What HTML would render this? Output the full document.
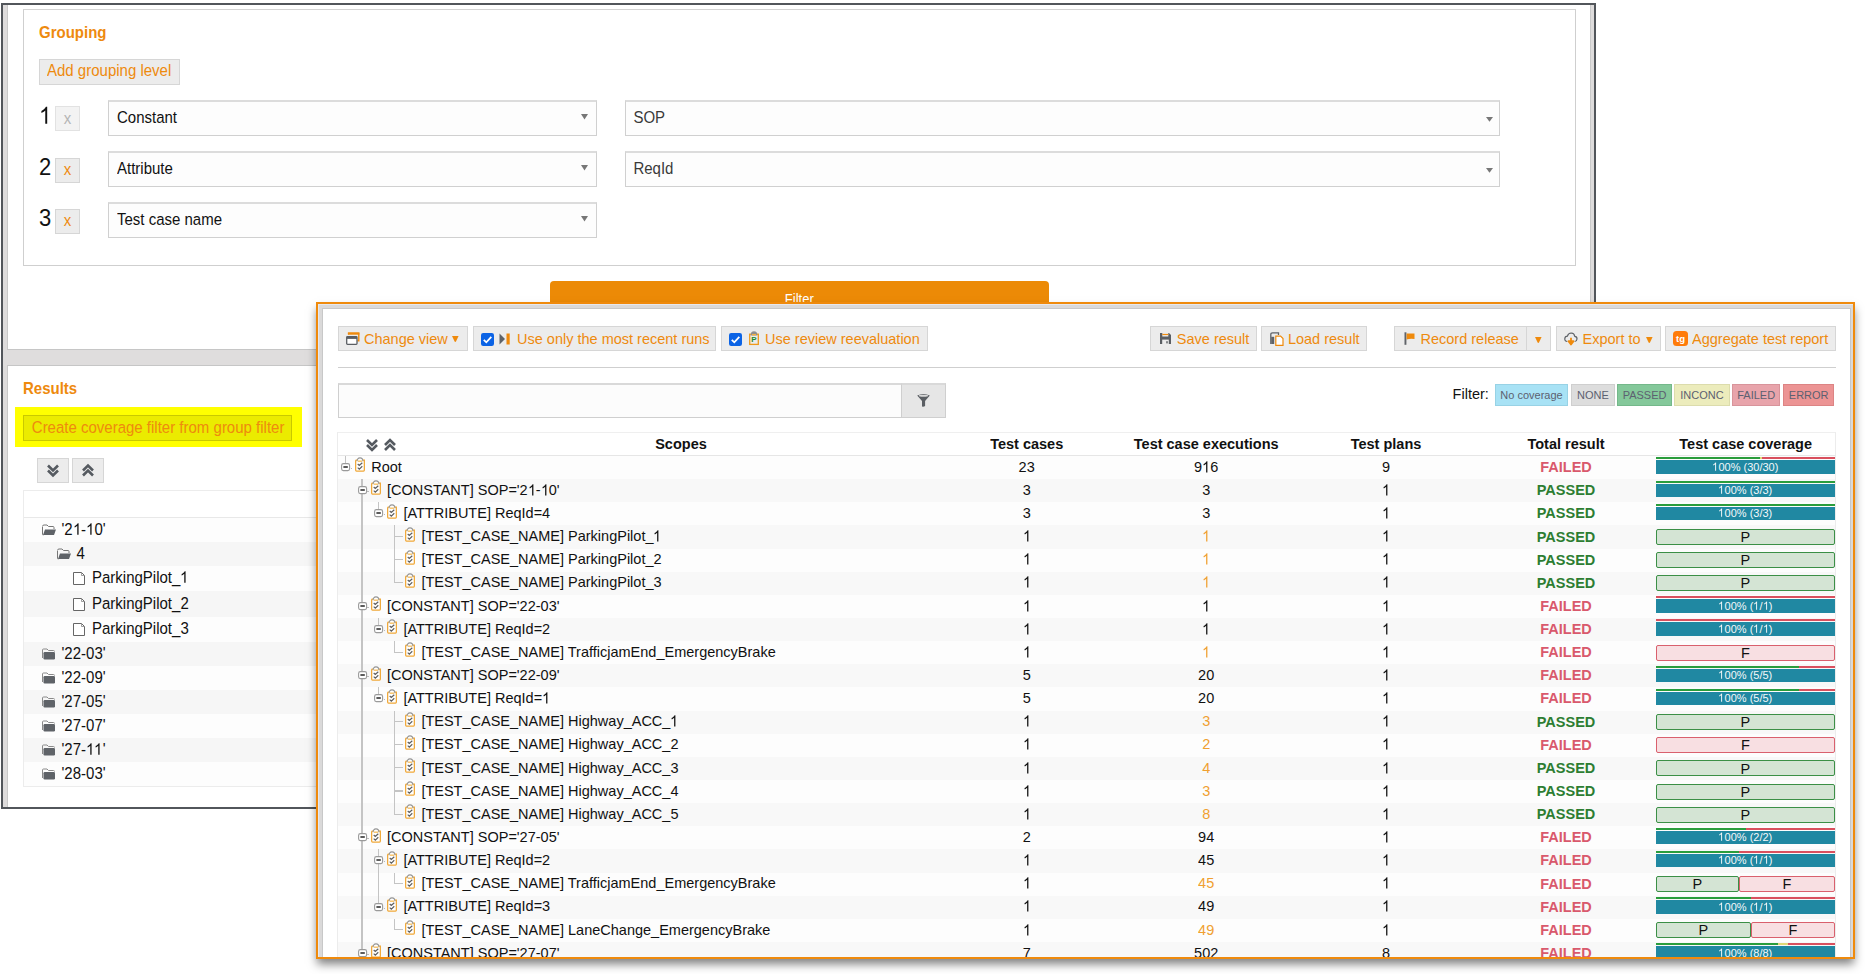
<!DOCTYPE html>
<html><head><meta charset="utf-8"><style>
html,body{margin:0;padding:0;background:#fff;}
body{width:1865px;height:974px;position:relative;overflow:hidden;font-family:"Liberation Sans", sans-serif;}
.a{position:absolute;}
.t{position:absolute;white-space:pre;line-height:1.117;transform:scaleY(1.07);}
svg.a{overflow:visible;}
</style></head><body>
<div class="a" style="left:1.00px;top:3.00px;width:1595.00px;height:806.00px;border:2px solid #52565b;box-sizing:border-box;background:#fff;"></div>
<div class="a" style="left:3.00px;top:5.00px;width:4.00px;height:802.00px;background:#dedcdc;"></div>
<div class="a" style="left:1591.00px;top:5.00px;width:3.00px;height:802.00px;background:#dedcdc;"></div>
<div class="a" style="left:7.00px;top:5.00px;width:1.00px;height:344.00px;background:#c9c9c9;"></div>
<div class="a" style="left:7.00px;top:366.00px;width:1.00px;height:441.00px;background:#c9c9c9;"></div>
<div class="a" style="left:1590.00px;top:5.00px;width:1.00px;height:344.00px;background:#c9c9c9;"></div>
<div class="a" style="left:1590.00px;top:366.00px;width:1.00px;height:441.00px;background:#c9c9c9;"></div>
<div class="a" style="left:3.00px;top:349.00px;width:1591.00px;height:17.00px;background:#dfdddd;"></div>
<div class="a" style="left:7.00px;top:349.00px;width:1584.00px;height:1.00px;background:#c6c6c6;"></div>
<div class="a" style="left:7.00px;top:365.00px;width:1584.00px;height:1.00px;background:#c6c6c6;"></div>
<div class="a" style="left:23.00px;top:9.00px;width:1553.00px;height:257.00px;border:1px solid #cfcfcf;border-top:1px solid #d4d4d4;box-sizing:border-box;"></div>
<div class="t" style="left:39.00px;top:24.92px;font-size:15px;font-weight:700;color:#ee8a0e;transform-origin:0 13.58px;">Grouping</div>
<div class="a" style="left:38.50px;top:58.50px;width:141.50px;height:26.00px;background:#ececec;border:1px solid #d6d6d6;box-sizing:border-box;"></div>
<div class="t" style="left:47.00px;top:62.83px;font-size:15px;font-weight:400;color:#ee8a0e;transform-origin:0 13.58px;">Add grouping level</div>
<div class="t" style="left:38.90px;top:104.69px;font-size:22px;font-weight:400;color:#111;transform-origin:0 19.91px;"><svg width="12.235" height="15.748" viewBox="0 0 1139 1466" style="vertical-align:baseline;overflow:visible"><path d="M763 0H583V1147Q518 1085 412 1023Q306 961 223 930V1104Q373 1175 486 1276Q599 1377 646 1466H763Z" transform="matrix(1 0 0 -1 0 1466)" fill="currentColor"/></svg></div>
<div class="a" style="left:55.00px;top:106.20px;width:25.00px;height:25.00px;background:#f3f3f3;border:1px solid #e2e2e2;box-sizing:border-box;"></div>
<div class="t" style="left:57.50px;top:111.22px;width:20px;text-align:center;font-size:15px;font-weight:400;color:#b5b5b5;transform-origin:0 13.58px;">x</div>
<div class="a" style="left:108.00px;top:100.00px;width:489.00px;height:36.40px;background:#fdfdfd;border:1px solid #d0d0d0;border-top:2px solid #dcdcdc;box-sizing:border-box;"></div>
<div class="t" style="left:117.00px;top:109.62px;font-size:15px;font-weight:400;color:#111;transform-origin:0 13.58px;">Constant</div>
<svg class="a" style="left:580.60px;top:114.20px" width="7" height="5.5" viewBox="0 0 7 5.5"><path d="M0 0H7L3.5 5.5Z" fill="#777"/></svg>
<div class="a" style="left:625.00px;top:100.00px;width:875.00px;height:36.40px;background:#fdfdfd;border:1px solid #d0d0d0;border-top:2px solid #dcdcdc;box-sizing:border-box;"></div>
<div class="t" style="left:633.40px;top:110.22px;font-size:15px;font-weight:400;color:#3a3a3a;transform-origin:0 13.58px;">SOP</div>
<svg class="a" style="left:1485.50px;top:116.90px" width="7" height="4.8" viewBox="0 0 7 4.8"><path d="M0 0H7L3.5 4.8Z" fill="#777"/></svg>
<div class="t" style="left:38.90px;top:155.69px;font-size:22px;font-weight:400;color:#111;transform-origin:0 19.91px;">2</div>
<div class="a" style="left:55.00px;top:157.50px;width:25.00px;height:25.00px;background:#ececec;border:1px solid #d6d6d6;box-sizing:border-box;"></div>
<div class="t" style="left:57.50px;top:162.23px;width:20px;text-align:center;font-size:15px;font-weight:400;color:#ee8a0e;transform-origin:0 13.58px;">x</div>
<div class="a" style="left:108.00px;top:151.00px;width:489.00px;height:36.40px;background:#fdfdfd;border:1px solid #d0d0d0;border-top:2px solid #dcdcdc;box-sizing:border-box;"></div>
<div class="t" style="left:117.00px;top:160.62px;font-size:15px;font-weight:400;color:#111;transform-origin:0 13.58px;">Attribute</div>
<svg class="a" style="left:580.60px;top:165.20px" width="7" height="5.5" viewBox="0 0 7 5.5"><path d="M0 0H7L3.5 5.5Z" fill="#777"/></svg>
<div class="a" style="left:625.00px;top:151.00px;width:875.00px;height:36.40px;background:#fdfdfd;border:1px solid #d0d0d0;border-top:2px solid #dcdcdc;box-sizing:border-box;"></div>
<div class="t" style="left:633.40px;top:161.23px;font-size:15px;font-weight:400;color:#3a3a3a;transform-origin:0 13.58px;">ReqId</div>
<svg class="a" style="left:1485.50px;top:167.90px" width="7" height="4.8" viewBox="0 0 7 4.8"><path d="M0 0H7L3.5 4.8Z" fill="#777"/></svg>
<div class="t" style="left:38.90px;top:206.69px;font-size:22px;font-weight:400;color:#111;transform-origin:0 19.91px;">3</div>
<div class="a" style="left:55.00px;top:208.50px;width:25.00px;height:25.00px;background:#ececec;border:1px solid #d6d6d6;box-sizing:border-box;"></div>
<div class="t" style="left:57.50px;top:213.23px;width:20px;text-align:center;font-size:15px;font-weight:400;color:#ee8a0e;transform-origin:0 13.58px;">x</div>
<div class="a" style="left:108.00px;top:202.00px;width:489.00px;height:36.40px;background:#fdfdfd;border:1px solid #d0d0d0;border-top:2px solid #dcdcdc;box-sizing:border-box;"></div>
<div class="t" style="left:117.00px;top:211.62px;font-size:15px;font-weight:400;color:#111;transform-origin:0 13.58px;">Test case name</div>
<svg class="a" style="left:580.60px;top:216.20px" width="7" height="5.5" viewBox="0 0 7 5.5"><path d="M0 0H7L3.5 5.5Z" fill="#777"/></svg>
<div class="a" style="left:550.00px;top:281.00px;width:499.00px;height:40.00px;background:#ec8a06;border-radius:4px;"></div>
<div class="t" style="left:749.30px;top:293.44px;width:100px;text-align:center;font-size:13px;font-weight:400;color:#fff;transform-origin:0 11.77px;">Filter</div>
<div class="t" style="left:23.00px;top:381.43px;font-size:15px;font-weight:700;color:#ee8a0e;transform-origin:0 13.58px;">Results</div>
<div class="a" style="left:15.00px;top:407.00px;width:287.00px;height:40.00px;background:#ffff00;"></div>
<div class="a" style="left:23.00px;top:415.00px;width:269.00px;height:26.00px;background:#ebeb00;border:1px solid #c9c900;box-sizing:border-box;"></div>
<div class="t" style="left:31.80px;top:419.62px;font-size:15px;font-weight:400;color:#ee8a0e;transform-origin:0 13.58px;">Create coverage filter from group filter</div>
<div class="a" style="left:37.00px;top:458.20px;width:31.80px;height:24.60px;background:#ececec;border:1px solid #d6d6d6;box-sizing:border-box;"></div>
<div class="a" style="left:72.20px;top:458.20px;width:31.80px;height:24.60px;background:#ececec;border:1px solid #d6d6d6;box-sizing:border-box;"></div>
<svg class="a" style="left:46.50px;top:464.00px" width="12" height="13" viewBox="0 0 12 12"><path d="M1 1L6 6L11 1M1 6L6 11L11 6" fill="none" stroke="#555a60" stroke-width="2.6"/></svg>
<svg class="a" style="left:82.00px;top:464.00px" width="12" height="13" viewBox="0 0 12 12"><path d="M1 11L6 6L11 11M1 6L6 1L11 6" fill="none" stroke="#555a60" stroke-width="2.6"/></svg>
<div class="a" style="left:23.00px;top:490.00px;width:300.00px;height:297.00px;border:1px solid #ececec;box-sizing:border-box;background:#fff;"></div>
<div class="a" style="left:24.00px;top:517.00px;width:299.00px;height:1.00px;background:#e8e8e8;"></div>
<div class="a" style="left:24.00px;top:518.00px;width:299.00px;height:24.00px;background:#fdfdfd;"></div>
<svg class="a" style="left:42.00px;top:524.00px" width="14" height="12" viewBox="0 0 14 12"><path d="M0.5 2.5Q0.5 1 2 1H5L6.5 2.5H11Q12 2.5 12 3.5V5" fill="none" stroke="#777" stroke-width="1"/><path d="M0.5 3V10.5Q0.5 11 1.5 11" fill="none" stroke="#777"/><path d="M3 5.5H14L12 11H1Z" fill="#5f6368"/></svg>
<div class="t" style="left:61.50px;top:521.72px;font-size:15px;font-weight:400;color:#111;transform-origin:0 13.58px;">'2<svg width="8.342" height="10.737" viewBox="0 0 1139 1466" style="vertical-align:baseline;overflow:visible"><path d="M763 0H583V1147Q518 1085 412 1023Q306 961 223 930V1104Q373 1175 486 1276Q599 1377 646 1466H763Z" transform="matrix(1 0 0 -1 0 1466)" fill="currentColor"/></svg>-<svg width="8.342" height="10.737" viewBox="0 0 1139 1466" style="vertical-align:baseline;overflow:visible"><path d="M763 0H583V1147Q518 1085 412 1023Q306 961 223 930V1104Q373 1175 486 1276Q599 1377 646 1466H763Z" transform="matrix(1 0 0 -1 0 1466)" fill="currentColor"/></svg>0'</div>
<div class="a" style="left:24.00px;top:542.00px;width:299.00px;height:24.00px;background:#f6f6f6;"></div>
<svg class="a" style="left:57.00px;top:548.00px" width="14" height="12" viewBox="0 0 14 12"><path d="M0.5 2.5Q0.5 1 2 1H5L6.5 2.5H11Q12 2.5 12 3.5V5" fill="none" stroke="#777" stroke-width="1"/><path d="M0.5 3V10.5Q0.5 11 1.5 11" fill="none" stroke="#777"/><path d="M3 5.5H14L12 11H1Z" fill="#5f6368"/></svg>
<div class="t" style="left:76.50px;top:545.72px;font-size:15px;font-weight:400;color:#111;transform-origin:0 13.58px;">4</div>
<div class="a" style="left:24.00px;top:566.00px;width:299.00px;height:25.40px;background:#fdfdfd;"></div>
<svg class="a" style="left:73.00px;top:572.20px" width="12" height="13" viewBox="0 0 12 13"><path d="M0.5 0.5H8.5L11.5 3.5V12.5H0.5Z" fill="#fff" stroke="#666" stroke-width="1"/><path d="M8.5 0.5V3.5H11.5" fill="none" stroke="#888" stroke-width="0.8"/></svg>
<div class="t" style="left:92.00px;top:570.42px;font-size:15px;font-weight:400;color:#111;transform-origin:0 13.58px;">ParkingPilot_<svg width="8.342" height="10.737" viewBox="0 0 1139 1466" style="vertical-align:baseline;overflow:visible"><path d="M763 0H583V1147Q518 1085 412 1023Q306 961 223 930V1104Q373 1175 486 1276Q599 1377 646 1466H763Z" transform="matrix(1 0 0 -1 0 1466)" fill="currentColor"/></svg></div>
<div class="a" style="left:24.00px;top:591.40px;width:299.00px;height:25.40px;background:#f6f6f6;"></div>
<svg class="a" style="left:73.00px;top:597.60px" width="12" height="13" viewBox="0 0 12 13"><path d="M0.5 0.5H8.5L11.5 3.5V12.5H0.5Z" fill="#fff" stroke="#666" stroke-width="1"/><path d="M8.5 0.5V3.5H11.5" fill="none" stroke="#888" stroke-width="0.8"/></svg>
<div class="t" style="left:92.00px;top:595.82px;font-size:15px;font-weight:400;color:#111;transform-origin:0 13.58px;">ParkingPilot_2</div>
<div class="a" style="left:24.00px;top:616.80px;width:299.00px;height:25.40px;background:#fdfdfd;"></div>
<svg class="a" style="left:73.00px;top:623.00px" width="12" height="13" viewBox="0 0 12 13"><path d="M0.5 0.5H8.5L11.5 3.5V12.5H0.5Z" fill="#fff" stroke="#666" stroke-width="1"/><path d="M8.5 0.5V3.5H11.5" fill="none" stroke="#888" stroke-width="0.8"/></svg>
<div class="t" style="left:92.00px;top:621.22px;font-size:15px;font-weight:400;color:#111;transform-origin:0 13.58px;">ParkingPilot_3</div>
<div class="a" style="left:24.00px;top:642.20px;width:299.00px;height:24.00px;background:#f6f6f6;"></div>
<svg class="a" style="left:42.00px;top:648.20px" width="14" height="12" viewBox="0 0 14 12"><path d="M0.5 10V2Q0.5 1 1.5 1H5L6.5 2.5H11.5Q12.5 2.5 12.5 3.5" fill="none" stroke="#8a8a8a" stroke-width="1"/><rect x="1.5" y="4" width="11.5" height="7.5" rx="1.2" fill="#5f6368"/></svg>
<div class="t" style="left:61.50px;top:645.92px;font-size:15px;font-weight:400;color:#111;transform-origin:0 13.58px;">'22-03'</div>
<div class="a" style="left:24.00px;top:666.20px;width:299.00px;height:24.00px;background:#fdfdfd;"></div>
<svg class="a" style="left:42.00px;top:672.20px" width="14" height="12" viewBox="0 0 14 12"><path d="M0.5 10V2Q0.5 1 1.5 1H5L6.5 2.5H11.5Q12.5 2.5 12.5 3.5" fill="none" stroke="#8a8a8a" stroke-width="1"/><rect x="1.5" y="4" width="11.5" height="7.5" rx="1.2" fill="#5f6368"/></svg>
<div class="t" style="left:61.50px;top:669.92px;font-size:15px;font-weight:400;color:#111;transform-origin:0 13.58px;">'22-09'</div>
<div class="a" style="left:24.00px;top:690.20px;width:299.00px;height:24.00px;background:#f6f6f6;"></div>
<svg class="a" style="left:42.00px;top:696.20px" width="14" height="12" viewBox="0 0 14 12"><path d="M0.5 10V2Q0.5 1 1.5 1H5L6.5 2.5H11.5Q12.5 2.5 12.5 3.5" fill="none" stroke="#8a8a8a" stroke-width="1"/><rect x="1.5" y="4" width="11.5" height="7.5" rx="1.2" fill="#5f6368"/></svg>
<div class="t" style="left:61.50px;top:693.92px;font-size:15px;font-weight:400;color:#111;transform-origin:0 13.58px;">'27-05'</div>
<div class="a" style="left:24.00px;top:714.20px;width:299.00px;height:24.00px;background:#fdfdfd;"></div>
<svg class="a" style="left:42.00px;top:720.20px" width="14" height="12" viewBox="0 0 14 12"><path d="M0.5 10V2Q0.5 1 1.5 1H5L6.5 2.5H11.5Q12.5 2.5 12.5 3.5" fill="none" stroke="#8a8a8a" stroke-width="1"/><rect x="1.5" y="4" width="11.5" height="7.5" rx="1.2" fill="#5f6368"/></svg>
<div class="t" style="left:61.50px;top:717.92px;font-size:15px;font-weight:400;color:#111;transform-origin:0 13.58px;">'27-07'</div>
<div class="a" style="left:24.00px;top:738.20px;width:299.00px;height:24.00px;background:#f6f6f6;"></div>
<svg class="a" style="left:42.00px;top:744.20px" width="14" height="12" viewBox="0 0 14 12"><path d="M0.5 10V2Q0.5 1 1.5 1H5L6.5 2.5H11.5Q12.5 2.5 12.5 3.5" fill="none" stroke="#8a8a8a" stroke-width="1"/><rect x="1.5" y="4" width="11.5" height="7.5" rx="1.2" fill="#5f6368"/></svg>
<div class="t" style="left:61.50px;top:741.92px;font-size:15px;font-weight:400;color:#111;transform-origin:0 13.58px;">'27-<svg width="8.342" height="10.737" viewBox="0 0 1139 1466" style="vertical-align:baseline;overflow:visible"><path d="M763 0H583V1147Q518 1085 412 1023Q306 961 223 930V1104Q373 1175 486 1276Q599 1377 646 1466H763Z" transform="matrix(1 0 0 -1 0 1466)" fill="currentColor"/></svg><svg width="8.342" height="10.737" viewBox="0 0 1139 1466" style="vertical-align:baseline;overflow:visible"><path d="M763 0H583V1147Q518 1085 412 1023Q306 961 223 930V1104Q373 1175 486 1276Q599 1377 646 1466H763Z" transform="matrix(1 0 0 -1 0 1466)" fill="currentColor"/></svg>'</div>
<div class="a" style="left:24.00px;top:762.20px;width:299.00px;height:24.00px;background:#fdfdfd;"></div>
<svg class="a" style="left:42.00px;top:768.20px" width="14" height="12" viewBox="0 0 14 12"><path d="M0.5 10V2Q0.5 1 1.5 1H5L6.5 2.5H11.5Q12.5 2.5 12.5 3.5" fill="none" stroke="#8a8a8a" stroke-width="1"/><rect x="1.5" y="4" width="11.5" height="7.5" rx="1.2" fill="#5f6368"/></svg>
<div class="t" style="left:61.50px;top:765.92px;font-size:15px;font-weight:400;color:#111;transform-origin:0 13.58px;">'28-03'</div>
<div class="a" style="left:316px;top:302px;width:1539px;height:657px;box-shadow:0 6px 9px -1px rgba(0,0,0,0.5);"></div>
<div class="a" style="left:316.00px;top:302.00px;width:1539.00px;height:657.00px;border:2px solid #ef8a0c;border-bottom:2px solid #ef8a0c;box-sizing:border-box;background:#dad9d9;overflow:hidden;"></div>
<div class="a" style="left:318.00px;top:304.00px;width:1535.00px;height:1.00px;background:#e6e8ee;"></div>
<div class="a" style="left:318.00px;top:304.00px;width:1.00px;height:653.00px;background:#e6e8ee;"></div>
<div class="a" style="left:322.00px;top:308.00px;width:1529.00px;height:649.00px;background:#fff;border-left:1px solid #c8c8c8;border-top:1px solid #c8c8c8;border-right:1px solid #c8c8c8;box-sizing:border-box;"></div>
<div class="a" style="left:337.50px;top:326.00px;width:130.30px;height:25.00px;background:#ececec;border:1px solid #d6d6d6;box-sizing:border-box;"></div>
<svg class="a" style="left:346.00px;top:332.00px" width="14" height="13" viewBox="0 0 14 13"><path d="M2.5 2.5V1.2H12.8V8.8H11.5" fill="none" stroke="#ef8a0c" stroke-width="1.4"/><rect x="2" y="0.5" width="11.3" height="2.2" fill="#ef8a0c"/><rect x="0.7" y="4.7" width="10.3" height="7.6" rx="0.8" fill="#fff" stroke="#5a5e63" stroke-width="1.3"/><rect x="0.7" y="4.7" width="10.3" height="2.2" fill="#5a5e63"/></svg>
<div class="t" style="left:364.00px;top:330.58px;font-size:14.5px;font-weight:400;color:#ee8a0e;transform-origin:0 13.12px;">Change view</div>
<svg class="a" style="left:452.00px;top:336.40px" width="6.6" height="6.2" viewBox="0 0 6.6 6.2"><path d="M0 0H6.6L4 5.6Q3.3 6.4 2.6 5.6Z" fill="#ef8a0c"/></svg>
<div class="a" style="left:472.50px;top:326.00px;width:243.50px;height:25.00px;background:#ececec;border:1px solid #d6d6d6;box-sizing:border-box;"></div>
<svg class="a" style="left:480.70px;top:332.80px" width="13" height="13" viewBox="0 0 13 13"><rect x="0" y="0" width="13" height="13" rx="2.2" fill="#0b63e5"/><path d="M2.8 6.8L5.3 9.3L10.3 3.8" fill="none" stroke="#fff" stroke-width="1.8"/></svg>
<svg class="a" style="left:499.00px;top:332.50px" width="12" height="12" viewBox="0 0 12 12"><path d="M0.5 0.5L6 6L0.5 11.5Z" fill="#5f6368"/><rect x="7.5" y="0.5" width="3.2" height="11" fill="#ef8a0c"/></svg>
<div class="t" style="left:517.00px;top:330.58px;font-size:14.5px;font-weight:400;color:#ee8a0e;transform-origin:0 13.12px;">Use only the most recent runs</div>
<div class="a" style="left:721.30px;top:326.00px;width:206.50px;height:25.00px;background:#ececec;border:1px solid #d6d6d6;box-sizing:border-box;"></div>
<svg class="a" style="left:729.00px;top:332.80px" width="13" height="13" viewBox="0 0 13 13"><rect x="0" y="0" width="13" height="13" rx="2.2" fill="#0b63e5"/><path d="M2.8 6.8L5.3 9.3L10.3 3.8" fill="none" stroke="#fff" stroke-width="1.8"/></svg>
<svg class="a" style="left:748.50px;top:330.80px" width="10" height="14" viewBox="0 0 10 14"><rect x="0.7" y="3.2" width="8.6" height="10.2" fill="none" stroke="#ef9a1a" stroke-width="1.3"/><path d="M1.6 4.6Q1.6 0.3 5 0.3Q8.4 0.3 8.4 4.6Z" fill="#8f8f8f"/><rect x="3" y="3" width="4" height="1.4" fill="#f4b040"/><text x="5" y="11.3" font-family="Liberation Sans" font-weight="700" font-size="8" fill="#1e8a2a" text-anchor="middle">P</text></svg>
<div class="t" style="left:765.00px;top:330.58px;font-size:14.5px;font-weight:400;color:#ee8a0e;transform-origin:0 13.12px;">Use review reevaluation</div>
<div class="a" style="left:1150.20px;top:326.00px;width:106.60px;height:25.00px;background:#ececec;border:1px solid #d6d6d6;box-sizing:border-box;"></div>
<svg class="a" style="left:1160.00px;top:333.00px" width="11" height="11" viewBox="0 0 11 11"><path d="M0 0H9L11 2V11H0Z" fill="#5a5e63"/><rect x="2.3" y="0" width="6" height="3.5" fill="#ececec"/><rect x="2.3" y="0.9" width="6" height="1.2" fill="#ef8a0c"/><rect x="2.2" y="6.6" width="6.6" height="4.4" fill="#ececec"/><rect x="6.3" y="8.2" width="1.4" height="2.2" fill="#5a5e63"/></svg>
<div class="t" style="left:1176.80px;top:330.58px;font-size:14.5px;font-weight:400;color:#ee8a0e;transform-origin:0 13.12px;">Save result</div>
<div class="a" style="left:1261.30px;top:326.00px;width:105.40px;height:25.00px;background:#ececec;border:1px solid #d6d6d6;box-sizing:border-box;"></div>
<svg class="a" style="left:1270.00px;top:332.00px" width="14" height="14" viewBox="0 0 14 14"><path d="M0.8 12V2.5Q0.8 0.8 2.5 0.8H8.5V3" fill="none" stroke="#5f6368" stroke-width="1.3"/><rect x="1.2" y="4.8" width="3" height="7.2" fill="#5f6368"/><path d="M5.8 4.2H10.6L13 6.6V13.3H5.8Z" fill="#fff" stroke="#ef8a0c" stroke-width="1.2"/></svg>
<div class="t" style="left:1287.90px;top:330.58px;font-size:14.5px;font-weight:400;color:#ee8a0e;transform-origin:0 13.12px;">Load result</div>
<div class="a" style="left:1394.30px;top:326.00px;width:157.00px;height:25.00px;background:#ececec;border:1px solid #d6d6d6;box-sizing:border-box;"></div>
<div class="a" style="left:1526.00px;top:326.00px;width:1.00px;height:25.00px;background:#d6d6d6;"></div>
<svg class="a" style="left:1404.00px;top:332.00px" width="11" height="13" viewBox="0 0 11 13"><rect x="0.5" y="0.3" width="1.9" height="12.5" fill="#5f6368"/><path d="M2.6 1.6H10.5V7.0Q6.5 6.2 2.6 7.4Z" fill="#ef8a0c"/></svg>
<div class="t" style="left:1420.50px;top:330.58px;font-size:14.5px;font-weight:400;color:#ee8a0e;transform-origin:0 13.12px;">Record release</div>
<svg class="a" style="left:1535.40px;top:336.80px" width="6.6" height="6.2" viewBox="0 0 6.6 6.2"><path d="M0 0H6.6L4 5.6Q3.3 6.4 2.6 5.6Z" fill="#ef8a0c"/></svg>
<div class="a" style="left:1556.20px;top:326.00px;width:105.00px;height:25.00px;background:#ececec;border:1px solid #d6d6d6;box-sizing:border-box;"></div>
<svg class="a" style="left:1564.00px;top:331.50px" width="14" height="14" viewBox="0 0 14 14"><path d="M3.3 9.5Q0.6 9.3 0.8 6.6Q1.0 4.2 3.4 4.1Q4.2 1.0 7.2 1.0Q10.3 1.2 10.8 4.3Q13.2 4.6 13.0 7.0Q12.8 9.3 10.7 9.5" fill="none" stroke="#5f6368" stroke-width="1.2"/><path d="M7 5.8V9.2M4.5 9.2H9.5L7 12.5Z" fill="#ef8a0c" stroke="#ef8a0c" stroke-width="1.8" stroke-linejoin="round"/></svg>
<div class="t" style="left:1582.50px;top:330.58px;font-size:14.5px;font-weight:400;color:#ee8a0e;transform-origin:0 13.12px;">Export to</div>
<svg class="a" style="left:1645.50px;top:336.80px" width="6.6" height="6.2" viewBox="0 0 6.6 6.2"><path d="M0 0H6.6L4 5.6Q3.3 6.4 2.6 5.6Z" fill="#ef8a0c"/></svg>
<div class="a" style="left:1665.40px;top:326.00px;width:170.60px;height:25.00px;background:#ececec;border:1px solid #d6d6d6;box-sizing:border-box;"></div>
<svg class="a" style="left:1673.00px;top:331.00px" width="15" height="15" viewBox="0 0 15 15"><rect x="0" y="0" width="15" height="15" rx="3.5" fill="#ff7b0a"/><text x="7.5" y="10.8" font-family="Liberation Sans" font-weight="700" font-size="9.5" fill="#fff" text-anchor="middle">tg</text></svg>
<div class="t" style="left:1692.00px;top:330.58px;font-size:14.5px;font-weight:400;color:#ee8a0e;transform-origin:0 13.12px;">Aggregate test report</div>
<div class="a" style="left:337.50px;top:367.00px;width:1498.50px;height:1.00px;background:#cfcfcf;"></div>
<div class="a" style="left:337.50px;top:382.50px;width:608.30px;height:35.20px;background:#fcfcfc;border:1px solid #cfcfcf;border-top:2px solid #d9d9d9;box-sizing:border-box;"></div>
<div class="a" style="left:901.00px;top:382.50px;width:44.80px;height:35.20px;background:#e6e6e6;border:1px solid #cfcfcf;border-top:2px solid #d9d9d9;box-sizing:border-box;"></div>
<svg class="a" style="left:917.00px;top:394.00px" width="13" height="13" viewBox="0 0 13 13"><path d="M0.2 1.6Q6.5 -1.4 12.8 1.6L8.1 7V12Q6.6 13 5 12.5V7Z" fill="#5a5e63"/><ellipse cx="6.5" cy="1.7" rx="4.7" ry="0.95" fill="#d8d8d8"/></svg>
<div class="t" style="left:1452.60px;top:386.38px;font-size:14.5px;font-weight:400;color:#111;transform-origin:0 13.12px;">Filter:</div>
<div class="a" style="left:1494.60px;top:384.00px;width:73.90px;height:21.50px;background:#a8e2f5;border:1px solid #98d2e5;box-sizing:border-box;"></div>
<div class="t" style="left:1489.60px;top:388.85px;width:83.90000000000009px;text-align:center;font-size:11px;font-weight:400;color:#5c6070;transform-origin:0 9.96px;">No coverage</div>
<div class="a" style="left:1571.20px;top:384.00px;width:43.50px;height:21.50px;background:#dddddd;border:1px solid #cfcfcf;box-sizing:border-box;"></div>
<div class="t" style="left:1566.20px;top:388.85px;width:53.5px;text-align:center;font-size:11px;font-weight:400;color:#5c6070;transform-origin:0 9.96px;">NONE</div>
<div class="a" style="left:1617.30px;top:384.00px;width:54.50px;height:21.50px;background:#84c89a;border:1px solid #74b88a;box-sizing:border-box;"></div>
<div class="t" style="left:1612.30px;top:388.85px;width:64.5px;text-align:center;font-size:11px;font-weight:400;color:#5c6070;transform-origin:0 9.96px;">PASSED</div>
<div class="a" style="left:1674.20px;top:384.00px;width:55.40px;height:21.50px;background:#ececbc;border:1px solid #dcdcac;box-sizing:border-box;"></div>
<div class="t" style="left:1669.20px;top:388.85px;width:65.39999999999986px;text-align:center;font-size:11px;font-weight:400;color:#5c6070;transform-origin:0 9.96px;">INCONC</div>
<div class="a" style="left:1732.00px;top:384.00px;width:48.40px;height:21.50px;background:#e8a4ab;border:1px solid #d8949b;box-sizing:border-box;"></div>
<div class="t" style="left:1727.00px;top:388.85px;width:58.40000000000009px;text-align:center;font-size:11px;font-weight:400;color:#5c6070;transform-origin:0 9.96px;">FAILED</div>
<div class="a" style="left:1783.00px;top:384.00px;width:51.40px;height:21.50px;background:#ec9494;border:1px solid #dc8484;box-sizing:border-box;"></div>
<div class="t" style="left:1778.00px;top:388.85px;width:61.40000000000009px;text-align:center;font-size:11px;font-weight:400;color:#5c6070;transform-origin:0 9.96px;">ERROR</div>
<div class="a" style="left:337.20px;top:432.20px;width:1498.60px;height:23.40px;border-top:1px solid #efefef;border-left:1px solid #ececec;border-right:1px solid #ececec;border-bottom:1px solid #e6e6e6;box-sizing:border-box;background:#fff;"></div>
<svg class="a" style="left:366.00px;top:438.50px" width="12" height="12" viewBox="0 0 12 12"><path d="M1 1L6 6L11 1M1 6L6 11L11 6" fill="none" stroke="#555a60" stroke-width="2.6"/></svg>
<svg class="a" style="left:384.00px;top:438.50px" width="12" height="12" viewBox="0 0 12 12"><path d="M1 11L6 6L11 11M1 6L6 1L11 6" fill="none" stroke="#555a60" stroke-width="2.6"/></svg>
<div class="t" style="left:581.00px;top:435.68px;width:200px;text-align:center;font-size:14.5px;font-weight:700;color:#111;transform-origin:0 13.12px;">Scopes</div>
<div class="t" style="left:926.70px;top:435.68px;width:200px;text-align:center;font-size:14.5px;font-weight:700;color:#111;transform-origin:0 13.12px;">Test cases</div>
<div class="t" style="left:1106.20px;top:435.68px;width:200px;text-align:center;font-size:14.5px;font-weight:700;color:#111;transform-origin:0 13.12px;">Test case executions</div>
<div class="t" style="left:1286.00px;top:435.68px;width:200px;text-align:center;font-size:14.5px;font-weight:700;color:#111;transform-origin:0 13.12px;">Test plans</div>
<div class="t" style="left:1466.00px;top:435.68px;width:200px;text-align:center;font-size:14.5px;font-weight:700;color:#111;transform-origin:0 13.12px;">Total result</div>
<div class="t" style="left:1645.70px;top:435.68px;width:200px;text-align:center;font-size:14.5px;font-weight:700;color:#111;transform-origin:0 13.12px;">Test case coverage</div>
<div class="a" style="left:322px;top:456px;width:1529px;height:501px;overflow:hidden;">
<div class="a" style="left:16.20px;top:0.00px;width:1496.60px;height:23.34px;background:#fdfdfd;"></div>
<div class="a" style="left:16.20px;top:23.14px;width:1496.60px;height:23.34px;background:#f8f8f8;"></div>
<div class="a" style="left:16.20px;top:46.28px;width:1496.60px;height:23.34px;background:#fdfdfd;"></div>
<div class="a" style="left:16.20px;top:69.42px;width:1496.60px;height:23.34px;background:#f8f8f8;"></div>
<div class="a" style="left:16.20px;top:92.56px;width:1496.60px;height:23.34px;background:#fdfdfd;"></div>
<div class="a" style="left:16.20px;top:115.70px;width:1496.60px;height:23.34px;background:#f8f8f8;"></div>
<div class="a" style="left:16.20px;top:138.84px;width:1496.60px;height:23.34px;background:#fdfdfd;"></div>
<div class="a" style="left:16.20px;top:161.98px;width:1496.60px;height:23.34px;background:#f8f8f8;"></div>
<div class="a" style="left:16.20px;top:185.12px;width:1496.60px;height:23.34px;background:#fdfdfd;"></div>
<div class="a" style="left:16.20px;top:208.26px;width:1496.60px;height:23.34px;background:#f8f8f8;"></div>
<div class="a" style="left:16.20px;top:231.40px;width:1496.60px;height:23.34px;background:#fdfdfd;"></div>
<div class="a" style="left:16.20px;top:254.54px;width:1496.60px;height:23.34px;background:#f8f8f8;"></div>
<div class="a" style="left:16.20px;top:277.68px;width:1496.60px;height:23.34px;background:#fdfdfd;"></div>
<div class="a" style="left:16.20px;top:300.82px;width:1496.60px;height:23.34px;background:#f8f8f8;"></div>
<div class="a" style="left:16.20px;top:323.96px;width:1496.60px;height:23.34px;background:#fdfdfd;"></div>
<div class="a" style="left:16.20px;top:347.10px;width:1496.60px;height:23.34px;background:#f8f8f8;"></div>
<div class="a" style="left:16.20px;top:370.24px;width:1496.60px;height:23.34px;background:#fdfdfd;"></div>
<div class="a" style="left:16.20px;top:393.38px;width:1496.60px;height:23.34px;background:#f8f8f8;"></div>
<div class="a" style="left:16.20px;top:416.52px;width:1496.60px;height:23.34px;background:#fdfdfd;"></div>
<div class="a" style="left:16.20px;top:439.66px;width:1496.60px;height:23.34px;background:#f8f8f8;"></div>
<div class="a" style="left:16.20px;top:462.80px;width:1496.60px;height:23.34px;background:#fdfdfd;"></div>
<div class="a" style="left:16.20px;top:485.94px;width:1496.60px;height:23.34px;background:#f8f8f8;"></div>
<div class="a" style="left:15.20px;top:0.00px;width:1.00px;height:510.00px;background:#ececec;"></div>
<div class="a" style="left:1512.80px;top:0.00px;width:1.00px;height:510.00px;background:#ececec;"></div>
<div class="a" style="left:23.00px;top:0.00px;width:1.30px;height:11.57px;background:#c4c4c4;"></div>
<svg class="a" style="left:19.30px;top:6.97px" width="10" height="9" viewBox="0 0 10 9"><rect x="0.6" y="0.6" width="8" height="7" rx="1.8" fill="#fff" stroke="#9a9a9a" stroke-width="1.1"/><rect x="2.4" y="3.2" width="4.4" height="1.6" fill="#333"/></svg>
<div class="a" style="left:29.00px;top:12.07px;width:1.20px;height:1.00px;background:#bbb;"></div>
<svg class="a" style="left:33.00px;top:1.27px" width="10" height="14.5" viewBox="0 0 10 14.5"><path d="M0.65 3.2V13.1Q0.65 14 1.5 14H8.5Q9.35 14 9.35 13.1V3.2H0.65" fill="#fff" stroke="#f0a838" stroke-width="1.25"/><path d="M2.1 4.3Q2.1 0.9 5 0.9Q7.9 0.9 7.9 4.3" fill="#fff" stroke="#959595" stroke-width="1.1"/><rect x="2.9" y="3.6" width="4.2" height="1.1" fill="#f2b03c"/><path d="M2.7 7L4.3 8.5L7.3 5.7M2.7 10.6L4.3 12.1L7.3 9.3" fill="none" stroke="#606060" stroke-width="1.2"/></svg>
<div class="t" style="left:49.20px;top:2.78px;font-size:14.5px;font-weight:400;color:#111;transform-origin:0 13.12px;">Root</div>
<div class="t" style="left:654.70px;top:2.78px;width:100px;text-align:center;font-size:14.5px;font-weight:400;color:#111;transform-origin:0 13.12px;">23</div>
<div class="t" style="left:834.20px;top:2.78px;width:100px;text-align:center;font-size:14.5px;font-weight:400;color:#111;transform-origin:0 13.12px;">9<svg width="8.064" height="10.379" viewBox="0 0 1139 1466" style="vertical-align:baseline;overflow:visible"><path d="M763 0H583V1147Q518 1085 412 1023Q306 961 223 930V1104Q373 1175 486 1276Q599 1377 646 1466H763Z" transform="matrix(1 0 0 -1 0 1466)" fill="currentColor"/></svg>6</div>
<div class="t" style="left:1014.00px;top:2.78px;width:100px;text-align:center;font-size:14.5px;font-weight:400;color:#111;transform-origin:0 13.12px;">9</div>
<div class="t" style="left:1184.00px;top:3.08px;width:120px;text-align:center;font-size:14.5px;font-weight:700;color:#d9596c;transform-origin:0 13.12px;">FAILED</div>
<div class="a" style="left:1333.80px;top:1.40px;width:104.00px;height:2.00px;background:#2a9d3c;"></div>
<div class="a" style="left:1437.80px;top:1.40px;width:2.50px;height:2.00px;background:#e0d878;"></div>
<div class="a" style="left:1440.30px;top:1.40px;width:72.70px;height:2.00px;background:#d9505e;"></div>
<div class="a" style="left:1333.80px;top:4.40px;width:179.20px;height:13.60px;background:#2088a2;"></div>
<div class="t" style="left:1333.40px;top:5.04px;width:180px;text-align:center;font-size:11px;font-weight:400;color:#f4f8fa;transform-origin:0 9.96px;"><svg width="6.118" height="7.874" viewBox="0 0 1139 1466" style="vertical-align:baseline;overflow:visible"><path d="M763 0H583V1147Q518 1085 412 1023Q306 961 223 930V1104Q373 1175 486 1276Q599 1377 646 1466H763Z" transform="matrix(1 0 0 -1 0 1466)" fill="currentColor"/></svg>00% (30/30)</div>
<div class="a" style="left:39.40px;top:23.14px;width:1.30px;height:11.57px;background:#c4c4c4;"></div>
<div class="a" style="left:39.40px;top:34.71px;width:1.30px;height:12.87px;background:#c4c4c4;"></div>
<svg class="a" style="left:35.70px;top:30.11px" width="10" height="9" viewBox="0 0 10 9"><rect x="0.6" y="0.6" width="8" height="7" rx="1.8" fill="#fff" stroke="#9a9a9a" stroke-width="1.1"/><rect x="2.4" y="3.2" width="4.4" height="1.6" fill="#333"/></svg>
<div class="a" style="left:45.40px;top:35.21px;width:1.20px;height:1.00px;background:#bbb;"></div>
<svg class="a" style="left:49.20px;top:24.41px" width="10" height="14.5" viewBox="0 0 10 14.5"><path d="M0.65 3.2V13.1Q0.65 14 1.5 14H8.5Q9.35 14 9.35 13.1V3.2H0.65" fill="#fff" stroke="#f0a838" stroke-width="1.25"/><path d="M2.1 4.3Q2.1 0.9 5 0.9Q7.9 0.9 7.9 4.3" fill="#fff" stroke="#959595" stroke-width="1.1"/><rect x="2.9" y="3.6" width="4.2" height="1.1" fill="#f2b03c"/><path d="M2.7 7L4.3 8.5L7.3 5.7M2.7 10.6L4.3 12.1L7.3 9.3" fill="none" stroke="#606060" stroke-width="1.2"/></svg>
<div class="t" style="left:65.00px;top:25.92px;font-size:14.5px;font-weight:400;color:#111;transform-origin:0 13.12px;">[CONSTANT] SOP='2<svg width="8.064" height="10.379" viewBox="0 0 1139 1466" style="vertical-align:baseline;overflow:visible"><path d="M763 0H583V1147Q518 1085 412 1023Q306 961 223 930V1104Q373 1175 486 1276Q599 1377 646 1466H763Z" transform="matrix(1 0 0 -1 0 1466)" fill="currentColor"/></svg>-<svg width="8.064" height="10.379" viewBox="0 0 1139 1466" style="vertical-align:baseline;overflow:visible"><path d="M763 0H583V1147Q518 1085 412 1023Q306 961 223 930V1104Q373 1175 486 1276Q599 1377 646 1466H763Z" transform="matrix(1 0 0 -1 0 1466)" fill="currentColor"/></svg>0'</div>
<div class="t" style="left:654.70px;top:25.92px;width:100px;text-align:center;font-size:14.5px;font-weight:400;color:#111;transform-origin:0 13.12px;">3</div>
<div class="t" style="left:834.20px;top:25.92px;width:100px;text-align:center;font-size:14.5px;font-weight:400;color:#111;transform-origin:0 13.12px;">3</div>
<div class="t" style="left:1014.00px;top:25.92px;width:100px;text-align:center;font-size:14.5px;font-weight:400;color:#111;transform-origin:0 13.12px;"><svg width="8.064" height="10.379" viewBox="0 0 1139 1466" style="vertical-align:baseline;overflow:visible"><path d="M763 0H583V1147Q518 1085 412 1023Q306 961 223 930V1104Q373 1175 486 1276Q599 1377 646 1466H763Z" transform="matrix(1 0 0 -1 0 1466)" fill="currentColor"/></svg></div>
<div class="t" style="left:1184.00px;top:26.22px;width:120px;text-align:center;font-size:14.5px;font-weight:700;color:#2d7d32;transform-origin:0 13.12px;">PASSED</div>
<div class="a" style="left:1333.80px;top:24.54px;width:179.20px;height:2.00px;background:#2a9d3c;"></div>
<div class="a" style="left:1333.80px;top:27.54px;width:179.20px;height:13.60px;background:#2088a2;"></div>
<div class="t" style="left:1333.40px;top:28.18px;width:180px;text-align:center;font-size:11px;font-weight:400;color:#f4f8fa;transform-origin:0 9.96px;"><svg width="6.118" height="7.874" viewBox="0 0 1139 1466" style="vertical-align:baseline;overflow:visible"><path d="M763 0H583V1147Q518 1085 412 1023Q306 961 223 930V1104Q373 1175 486 1276Q599 1377 646 1466H763Z" transform="matrix(1 0 0 -1 0 1466)" fill="currentColor"/></svg>00% (3/3)</div>
<div class="a" style="left:39.40px;top:46.28px;width:1.30px;height:23.34px;background:#c4c4c4;"></div>
<div class="a" style="left:55.70px;top:46.28px;width:1.30px;height:11.57px;background:#c4c4c4;"></div>
<svg class="a" style="left:52.00px;top:53.25px" width="10" height="9" viewBox="0 0 10 9"><rect x="0.6" y="0.6" width="8" height="7" rx="1.8" fill="#fff" stroke="#9a9a9a" stroke-width="1.1"/><rect x="2.4" y="3.2" width="4.4" height="1.6" fill="#333"/></svg>
<div class="a" style="left:61.70px;top:58.35px;width:1.20px;height:1.00px;background:#bbb;"></div>
<svg class="a" style="left:65.40px;top:47.55px" width="10" height="14.5" viewBox="0 0 10 14.5"><path d="M0.65 3.2V13.1Q0.65 14 1.5 14H8.5Q9.35 14 9.35 13.1V3.2H0.65" fill="#fff" stroke="#f0a838" stroke-width="1.25"/><path d="M2.1 4.3Q2.1 0.9 5 0.9Q7.9 0.9 7.9 4.3" fill="#fff" stroke="#959595" stroke-width="1.1"/><rect x="2.9" y="3.6" width="4.2" height="1.1" fill="#f2b03c"/><path d="M2.7 7L4.3 8.5L7.3 5.7M2.7 10.6L4.3 12.1L7.3 9.3" fill="none" stroke="#606060" stroke-width="1.2"/></svg>
<div class="t" style="left:81.40px;top:49.06px;font-size:14.5px;font-weight:400;color:#111;transform-origin:0 13.12px;">[ATTRIBUTE] ReqId=4</div>
<div class="t" style="left:654.70px;top:49.06px;width:100px;text-align:center;font-size:14.5px;font-weight:400;color:#111;transform-origin:0 13.12px;">3</div>
<div class="t" style="left:834.20px;top:49.06px;width:100px;text-align:center;font-size:14.5px;font-weight:400;color:#111;transform-origin:0 13.12px;">3</div>
<div class="t" style="left:1014.00px;top:49.06px;width:100px;text-align:center;font-size:14.5px;font-weight:400;color:#111;transform-origin:0 13.12px;"><svg width="8.064" height="10.379" viewBox="0 0 1139 1466" style="vertical-align:baseline;overflow:visible"><path d="M763 0H583V1147Q518 1085 412 1023Q306 961 223 930V1104Q373 1175 486 1276Q599 1377 646 1466H763Z" transform="matrix(1 0 0 -1 0 1466)" fill="currentColor"/></svg></div>
<div class="t" style="left:1184.00px;top:49.36px;width:120px;text-align:center;font-size:14.5px;font-weight:700;color:#2d7d32;transform-origin:0 13.12px;">PASSED</div>
<div class="a" style="left:1333.80px;top:47.68px;width:179.20px;height:2.00px;background:#2a9d3c;"></div>
<div class="a" style="left:1333.80px;top:50.68px;width:179.20px;height:13.60px;background:#2088a2;"></div>
<div class="t" style="left:1333.40px;top:51.32px;width:180px;text-align:center;font-size:11px;font-weight:400;color:#f4f8fa;transform-origin:0 9.96px;"><svg width="6.118" height="7.874" viewBox="0 0 1139 1466" style="vertical-align:baseline;overflow:visible"><path d="M763 0H583V1147Q518 1085 412 1023Q306 961 223 930V1104Q373 1175 486 1276Q599 1377 646 1466H763Z" transform="matrix(1 0 0 -1 0 1466)" fill="currentColor"/></svg>00% (3/3)</div>
<div class="a" style="left:39.40px;top:69.42px;width:1.30px;height:23.34px;background:#c4c4c4;"></div>
<div class="a" style="left:72.10px;top:69.42px;width:1.30px;height:11.37px;background:#c4c4c4;"></div>
<div class="a" style="left:72.10px;top:79.89px;width:8.50px;height:1.20px;background:#c4c4c4;"></div>
<div class="a" style="left:72.10px;top:79.89px;width:1.30px;height:12.87px;background:#c4c4c4;"></div>
<svg class="a" style="left:83.40px;top:70.69px" width="10" height="14.5" viewBox="0 0 10 14.5"><path d="M0.65 3.2V13.1Q0.65 14 1.5 14H8.5Q9.35 14 9.35 13.1V3.2H0.65" fill="#fff" stroke="#f0a838" stroke-width="1.25"/><path d="M2.1 4.3Q2.1 0.9 5 0.9Q7.9 0.9 7.9 4.3" fill="#fff" stroke="#959595" stroke-width="1.1"/><rect x="2.9" y="3.6" width="4.2" height="1.1" fill="#f2b03c"/><path d="M2.7 7L4.3 8.5L7.3 5.7M2.7 10.6L4.3 12.1L7.3 9.3" fill="none" stroke="#606060" stroke-width="1.2"/></svg>
<div class="t" style="left:99.40px;top:72.20px;font-size:14.5px;font-weight:400;color:#111;transform-origin:0 13.12px;">[TEST_CASE_NAME] ParkingPilot_<svg width="8.064" height="10.379" viewBox="0 0 1139 1466" style="vertical-align:baseline;overflow:visible"><path d="M763 0H583V1147Q518 1085 412 1023Q306 961 223 930V1104Q373 1175 486 1276Q599 1377 646 1466H763Z" transform="matrix(1 0 0 -1 0 1466)" fill="currentColor"/></svg></div>
<div class="t" style="left:654.70px;top:72.20px;width:100px;text-align:center;font-size:14.5px;font-weight:400;color:#111;transform-origin:0 13.12px;"><svg width="8.064" height="10.379" viewBox="0 0 1139 1466" style="vertical-align:baseline;overflow:visible"><path d="M763 0H583V1147Q518 1085 412 1023Q306 961 223 930V1104Q373 1175 486 1276Q599 1377 646 1466H763Z" transform="matrix(1 0 0 -1 0 1466)" fill="currentColor"/></svg></div>
<div class="t" style="left:834.20px;top:72.20px;width:100px;text-align:center;font-size:14.5px;font-weight:400;color:#f0a030;transform-origin:0 13.12px;"><svg width="8.064" height="10.379" viewBox="0 0 1139 1466" style="vertical-align:baseline;overflow:visible"><path d="M763 0H583V1147Q518 1085 412 1023Q306 961 223 930V1104Q373 1175 486 1276Q599 1377 646 1466H763Z" transform="matrix(1 0 0 -1 0 1466)" fill="currentColor"/></svg></div>
<div class="t" style="left:1014.00px;top:72.20px;width:100px;text-align:center;font-size:14.5px;font-weight:400;color:#111;transform-origin:0 13.12px;"><svg width="8.064" height="10.379" viewBox="0 0 1139 1466" style="vertical-align:baseline;overflow:visible"><path d="M763 0H583V1147Q518 1085 412 1023Q306 961 223 930V1104Q373 1175 486 1276Q599 1377 646 1466H763Z" transform="matrix(1 0 0 -1 0 1466)" fill="currentColor"/></svg></div>
<div class="t" style="left:1184.00px;top:72.50px;width:120px;text-align:center;font-size:14.5px;font-weight:700;color:#2d7d32;transform-origin:0 13.12px;">PASSED</div>
<div class="a" style="left:1333.80px;top:73.02px;width:179.20px;height:16.00px;background:#d4e4d4;border:1px solid #3b8f46;border-radius:2px;box-sizing:border-box;"></div>
<div class="t" style="left:1403.40px;top:73.10px;width:40px;text-align:center;font-size:14.5px;font-weight:400;color:#111;transform-origin:0 13.12px;">P</div>
<div class="a" style="left:39.40px;top:92.56px;width:1.30px;height:23.34px;background:#c4c4c4;"></div>
<div class="a" style="left:72.10px;top:92.56px;width:1.30px;height:11.37px;background:#c4c4c4;"></div>
<div class="a" style="left:72.10px;top:103.03px;width:8.50px;height:1.20px;background:#c4c4c4;"></div>
<div class="a" style="left:72.10px;top:103.03px;width:1.30px;height:12.87px;background:#c4c4c4;"></div>
<svg class="a" style="left:83.40px;top:93.83px" width="10" height="14.5" viewBox="0 0 10 14.5"><path d="M0.65 3.2V13.1Q0.65 14 1.5 14H8.5Q9.35 14 9.35 13.1V3.2H0.65" fill="#fff" stroke="#f0a838" stroke-width="1.25"/><path d="M2.1 4.3Q2.1 0.9 5 0.9Q7.9 0.9 7.9 4.3" fill="#fff" stroke="#959595" stroke-width="1.1"/><rect x="2.9" y="3.6" width="4.2" height="1.1" fill="#f2b03c"/><path d="M2.7 7L4.3 8.5L7.3 5.7M2.7 10.6L4.3 12.1L7.3 9.3" fill="none" stroke="#606060" stroke-width="1.2"/></svg>
<div class="t" style="left:99.40px;top:95.34px;font-size:14.5px;font-weight:400;color:#111;transform-origin:0 13.12px;">[TEST_CASE_NAME] ParkingPilot_2</div>
<div class="t" style="left:654.70px;top:95.34px;width:100px;text-align:center;font-size:14.5px;font-weight:400;color:#111;transform-origin:0 13.12px;"><svg width="8.064" height="10.379" viewBox="0 0 1139 1466" style="vertical-align:baseline;overflow:visible"><path d="M763 0H583V1147Q518 1085 412 1023Q306 961 223 930V1104Q373 1175 486 1276Q599 1377 646 1466H763Z" transform="matrix(1 0 0 -1 0 1466)" fill="currentColor"/></svg></div>
<div class="t" style="left:834.20px;top:95.34px;width:100px;text-align:center;font-size:14.5px;font-weight:400;color:#f0a030;transform-origin:0 13.12px;"><svg width="8.064" height="10.379" viewBox="0 0 1139 1466" style="vertical-align:baseline;overflow:visible"><path d="M763 0H583V1147Q518 1085 412 1023Q306 961 223 930V1104Q373 1175 486 1276Q599 1377 646 1466H763Z" transform="matrix(1 0 0 -1 0 1466)" fill="currentColor"/></svg></div>
<div class="t" style="left:1014.00px;top:95.34px;width:100px;text-align:center;font-size:14.5px;font-weight:400;color:#111;transform-origin:0 13.12px;"><svg width="8.064" height="10.379" viewBox="0 0 1139 1466" style="vertical-align:baseline;overflow:visible"><path d="M763 0H583V1147Q518 1085 412 1023Q306 961 223 930V1104Q373 1175 486 1276Q599 1377 646 1466H763Z" transform="matrix(1 0 0 -1 0 1466)" fill="currentColor"/></svg></div>
<div class="t" style="left:1184.00px;top:95.64px;width:120px;text-align:center;font-size:14.5px;font-weight:700;color:#2d7d32;transform-origin:0 13.12px;">PASSED</div>
<div class="a" style="left:1333.80px;top:96.16px;width:179.20px;height:16.00px;background:#d4e4d4;border:1px solid #3b8f46;border-radius:2px;box-sizing:border-box;"></div>
<div class="t" style="left:1403.40px;top:96.24px;width:40px;text-align:center;font-size:14.5px;font-weight:400;color:#111;transform-origin:0 13.12px;">P</div>
<div class="a" style="left:39.40px;top:115.70px;width:1.30px;height:23.34px;background:#c4c4c4;"></div>
<div class="a" style="left:72.10px;top:115.70px;width:1.30px;height:11.37px;background:#c4c4c4;"></div>
<div class="a" style="left:72.10px;top:126.17px;width:8.50px;height:1.20px;background:#c4c4c4;"></div>
<svg class="a" style="left:83.40px;top:116.97px" width="10" height="14.5" viewBox="0 0 10 14.5"><path d="M0.65 3.2V13.1Q0.65 14 1.5 14H8.5Q9.35 14 9.35 13.1V3.2H0.65" fill="#fff" stroke="#f0a838" stroke-width="1.25"/><path d="M2.1 4.3Q2.1 0.9 5 0.9Q7.9 0.9 7.9 4.3" fill="#fff" stroke="#959595" stroke-width="1.1"/><rect x="2.9" y="3.6" width="4.2" height="1.1" fill="#f2b03c"/><path d="M2.7 7L4.3 8.5L7.3 5.7M2.7 10.6L4.3 12.1L7.3 9.3" fill="none" stroke="#606060" stroke-width="1.2"/></svg>
<div class="t" style="left:99.40px;top:118.48px;font-size:14.5px;font-weight:400;color:#111;transform-origin:0 13.12px;">[TEST_CASE_NAME] ParkingPilot_3</div>
<div class="t" style="left:654.70px;top:118.48px;width:100px;text-align:center;font-size:14.5px;font-weight:400;color:#111;transform-origin:0 13.12px;"><svg width="8.064" height="10.379" viewBox="0 0 1139 1466" style="vertical-align:baseline;overflow:visible"><path d="M763 0H583V1147Q518 1085 412 1023Q306 961 223 930V1104Q373 1175 486 1276Q599 1377 646 1466H763Z" transform="matrix(1 0 0 -1 0 1466)" fill="currentColor"/></svg></div>
<div class="t" style="left:834.20px;top:118.48px;width:100px;text-align:center;font-size:14.5px;font-weight:400;color:#f0a030;transform-origin:0 13.12px;"><svg width="8.064" height="10.379" viewBox="0 0 1139 1466" style="vertical-align:baseline;overflow:visible"><path d="M763 0H583V1147Q518 1085 412 1023Q306 961 223 930V1104Q373 1175 486 1276Q599 1377 646 1466H763Z" transform="matrix(1 0 0 -1 0 1466)" fill="currentColor"/></svg></div>
<div class="t" style="left:1014.00px;top:118.48px;width:100px;text-align:center;font-size:14.5px;font-weight:400;color:#111;transform-origin:0 13.12px;"><svg width="8.064" height="10.379" viewBox="0 0 1139 1466" style="vertical-align:baseline;overflow:visible"><path d="M763 0H583V1147Q518 1085 412 1023Q306 961 223 930V1104Q373 1175 486 1276Q599 1377 646 1466H763Z" transform="matrix(1 0 0 -1 0 1466)" fill="currentColor"/></svg></div>
<div class="t" style="left:1184.00px;top:118.78px;width:120px;text-align:center;font-size:14.5px;font-weight:700;color:#2d7d32;transform-origin:0 13.12px;">PASSED</div>
<div class="a" style="left:1333.80px;top:119.30px;width:179.20px;height:16.00px;background:#d4e4d4;border:1px solid #3b8f46;border-radius:2px;box-sizing:border-box;"></div>
<div class="t" style="left:1403.40px;top:119.38px;width:40px;text-align:center;font-size:14.5px;font-weight:400;color:#111;transform-origin:0 13.12px;">P</div>
<div class="a" style="left:39.40px;top:138.84px;width:1.30px;height:11.57px;background:#c4c4c4;"></div>
<div class="a" style="left:39.40px;top:150.41px;width:1.30px;height:12.87px;background:#c4c4c4;"></div>
<svg class="a" style="left:35.70px;top:145.81px" width="10" height="9" viewBox="0 0 10 9"><rect x="0.6" y="0.6" width="8" height="7" rx="1.8" fill="#fff" stroke="#9a9a9a" stroke-width="1.1"/><rect x="2.4" y="3.2" width="4.4" height="1.6" fill="#333"/></svg>
<div class="a" style="left:45.40px;top:150.91px;width:1.20px;height:1.00px;background:#bbb;"></div>
<svg class="a" style="left:49.20px;top:140.11px" width="10" height="14.5" viewBox="0 0 10 14.5"><path d="M0.65 3.2V13.1Q0.65 14 1.5 14H8.5Q9.35 14 9.35 13.1V3.2H0.65" fill="#fff" stroke="#f0a838" stroke-width="1.25"/><path d="M2.1 4.3Q2.1 0.9 5 0.9Q7.9 0.9 7.9 4.3" fill="#fff" stroke="#959595" stroke-width="1.1"/><rect x="2.9" y="3.6" width="4.2" height="1.1" fill="#f2b03c"/><path d="M2.7 7L4.3 8.5L7.3 5.7M2.7 10.6L4.3 12.1L7.3 9.3" fill="none" stroke="#606060" stroke-width="1.2"/></svg>
<div class="t" style="left:65.00px;top:141.62px;font-size:14.5px;font-weight:400;color:#111;transform-origin:0 13.12px;">[CONSTANT] SOP='22-03'</div>
<div class="t" style="left:654.70px;top:141.62px;width:100px;text-align:center;font-size:14.5px;font-weight:400;color:#111;transform-origin:0 13.12px;"><svg width="8.064" height="10.379" viewBox="0 0 1139 1466" style="vertical-align:baseline;overflow:visible"><path d="M763 0H583V1147Q518 1085 412 1023Q306 961 223 930V1104Q373 1175 486 1276Q599 1377 646 1466H763Z" transform="matrix(1 0 0 -1 0 1466)" fill="currentColor"/></svg></div>
<div class="t" style="left:834.20px;top:141.62px;width:100px;text-align:center;font-size:14.5px;font-weight:400;color:#111;transform-origin:0 13.12px;"><svg width="8.064" height="10.379" viewBox="0 0 1139 1466" style="vertical-align:baseline;overflow:visible"><path d="M763 0H583V1147Q518 1085 412 1023Q306 961 223 930V1104Q373 1175 486 1276Q599 1377 646 1466H763Z" transform="matrix(1 0 0 -1 0 1466)" fill="currentColor"/></svg></div>
<div class="t" style="left:1014.00px;top:141.62px;width:100px;text-align:center;font-size:14.5px;font-weight:400;color:#111;transform-origin:0 13.12px;"><svg width="8.064" height="10.379" viewBox="0 0 1139 1466" style="vertical-align:baseline;overflow:visible"><path d="M763 0H583V1147Q518 1085 412 1023Q306 961 223 930V1104Q373 1175 486 1276Q599 1377 646 1466H763Z" transform="matrix(1 0 0 -1 0 1466)" fill="currentColor"/></svg></div>
<div class="t" style="left:1184.00px;top:141.92px;width:120px;text-align:center;font-size:14.5px;font-weight:700;color:#d9596c;transform-origin:0 13.12px;">FAILED</div>
<div class="a" style="left:1333.80px;top:140.24px;width:179.20px;height:2.00px;background:#d9505e;"></div>
<div class="a" style="left:1333.80px;top:143.24px;width:179.20px;height:13.60px;background:#2088a2;"></div>
<div class="t" style="left:1333.40px;top:143.89px;width:180px;text-align:center;font-size:11px;font-weight:400;color:#f4f8fa;transform-origin:0 9.96px;"><svg width="6.118" height="7.874" viewBox="0 0 1139 1466" style="vertical-align:baseline;overflow:visible"><path d="M763 0H583V1147Q518 1085 412 1023Q306 961 223 930V1104Q373 1175 486 1276Q599 1377 646 1466H763Z" transform="matrix(1 0 0 -1 0 1466)" fill="currentColor"/></svg>00% (<svg width="6.118" height="7.874" viewBox="0 0 1139 1466" style="vertical-align:baseline;overflow:visible"><path d="M763 0H583V1147Q518 1085 412 1023Q306 961 223 930V1104Q373 1175 486 1276Q599 1377 646 1466H763Z" transform="matrix(1 0 0 -1 0 1466)" fill="currentColor"/></svg>/<svg width="6.118" height="7.874" viewBox="0 0 1139 1466" style="vertical-align:baseline;overflow:visible"><path d="M763 0H583V1147Q518 1085 412 1023Q306 961 223 930V1104Q373 1175 486 1276Q599 1377 646 1466H763Z" transform="matrix(1 0 0 -1 0 1466)" fill="currentColor"/></svg>)</div>
<div class="a" style="left:39.40px;top:161.98px;width:1.30px;height:23.34px;background:#c4c4c4;"></div>
<div class="a" style="left:55.70px;top:161.98px;width:1.30px;height:11.57px;background:#c4c4c4;"></div>
<svg class="a" style="left:52.00px;top:168.95px" width="10" height="9" viewBox="0 0 10 9"><rect x="0.6" y="0.6" width="8" height="7" rx="1.8" fill="#fff" stroke="#9a9a9a" stroke-width="1.1"/><rect x="2.4" y="3.2" width="4.4" height="1.6" fill="#333"/></svg>
<div class="a" style="left:61.70px;top:174.05px;width:1.20px;height:1.00px;background:#bbb;"></div>
<svg class="a" style="left:65.40px;top:163.25px" width="10" height="14.5" viewBox="0 0 10 14.5"><path d="M0.65 3.2V13.1Q0.65 14 1.5 14H8.5Q9.35 14 9.35 13.1V3.2H0.65" fill="#fff" stroke="#f0a838" stroke-width="1.25"/><path d="M2.1 4.3Q2.1 0.9 5 0.9Q7.9 0.9 7.9 4.3" fill="#fff" stroke="#959595" stroke-width="1.1"/><rect x="2.9" y="3.6" width="4.2" height="1.1" fill="#f2b03c"/><path d="M2.7 7L4.3 8.5L7.3 5.7M2.7 10.6L4.3 12.1L7.3 9.3" fill="none" stroke="#606060" stroke-width="1.2"/></svg>
<div class="t" style="left:81.40px;top:164.76px;font-size:14.5px;font-weight:400;color:#111;transform-origin:0 13.12px;">[ATTRIBUTE] ReqId=2</div>
<div class="t" style="left:654.70px;top:164.76px;width:100px;text-align:center;font-size:14.5px;font-weight:400;color:#111;transform-origin:0 13.12px;"><svg width="8.064" height="10.379" viewBox="0 0 1139 1466" style="vertical-align:baseline;overflow:visible"><path d="M763 0H583V1147Q518 1085 412 1023Q306 961 223 930V1104Q373 1175 486 1276Q599 1377 646 1466H763Z" transform="matrix(1 0 0 -1 0 1466)" fill="currentColor"/></svg></div>
<div class="t" style="left:834.20px;top:164.76px;width:100px;text-align:center;font-size:14.5px;font-weight:400;color:#111;transform-origin:0 13.12px;"><svg width="8.064" height="10.379" viewBox="0 0 1139 1466" style="vertical-align:baseline;overflow:visible"><path d="M763 0H583V1147Q518 1085 412 1023Q306 961 223 930V1104Q373 1175 486 1276Q599 1377 646 1466H763Z" transform="matrix(1 0 0 -1 0 1466)" fill="currentColor"/></svg></div>
<div class="t" style="left:1014.00px;top:164.76px;width:100px;text-align:center;font-size:14.5px;font-weight:400;color:#111;transform-origin:0 13.12px;"><svg width="8.064" height="10.379" viewBox="0 0 1139 1466" style="vertical-align:baseline;overflow:visible"><path d="M763 0H583V1147Q518 1085 412 1023Q306 961 223 930V1104Q373 1175 486 1276Q599 1377 646 1466H763Z" transform="matrix(1 0 0 -1 0 1466)" fill="currentColor"/></svg></div>
<div class="t" style="left:1184.00px;top:165.06px;width:120px;text-align:center;font-size:14.5px;font-weight:700;color:#d9596c;transform-origin:0 13.12px;">FAILED</div>
<div class="a" style="left:1333.80px;top:163.38px;width:179.20px;height:2.00px;background:#d9505e;"></div>
<div class="a" style="left:1333.80px;top:166.38px;width:179.20px;height:13.60px;background:#2088a2;"></div>
<div class="t" style="left:1333.40px;top:167.03px;width:180px;text-align:center;font-size:11px;font-weight:400;color:#f4f8fa;transform-origin:0 9.96px;"><svg width="6.118" height="7.874" viewBox="0 0 1139 1466" style="vertical-align:baseline;overflow:visible"><path d="M763 0H583V1147Q518 1085 412 1023Q306 961 223 930V1104Q373 1175 486 1276Q599 1377 646 1466H763Z" transform="matrix(1 0 0 -1 0 1466)" fill="currentColor"/></svg>00% (<svg width="6.118" height="7.874" viewBox="0 0 1139 1466" style="vertical-align:baseline;overflow:visible"><path d="M763 0H583V1147Q518 1085 412 1023Q306 961 223 930V1104Q373 1175 486 1276Q599 1377 646 1466H763Z" transform="matrix(1 0 0 -1 0 1466)" fill="currentColor"/></svg>/<svg width="6.118" height="7.874" viewBox="0 0 1139 1466" style="vertical-align:baseline;overflow:visible"><path d="M763 0H583V1147Q518 1085 412 1023Q306 961 223 930V1104Q373 1175 486 1276Q599 1377 646 1466H763Z" transform="matrix(1 0 0 -1 0 1466)" fill="currentColor"/></svg>)</div>
<div class="a" style="left:39.40px;top:185.12px;width:1.30px;height:23.34px;background:#c4c4c4;"></div>
<div class="a" style="left:72.10px;top:185.12px;width:1.30px;height:11.37px;background:#c4c4c4;"></div>
<div class="a" style="left:72.10px;top:195.59px;width:8.50px;height:1.20px;background:#c4c4c4;"></div>
<svg class="a" style="left:83.40px;top:186.39px" width="10" height="14.5" viewBox="0 0 10 14.5"><path d="M0.65 3.2V13.1Q0.65 14 1.5 14H8.5Q9.35 14 9.35 13.1V3.2H0.65" fill="#fff" stroke="#f0a838" stroke-width="1.25"/><path d="M2.1 4.3Q2.1 0.9 5 0.9Q7.9 0.9 7.9 4.3" fill="#fff" stroke="#959595" stroke-width="1.1"/><rect x="2.9" y="3.6" width="4.2" height="1.1" fill="#f2b03c"/><path d="M2.7 7L4.3 8.5L7.3 5.7M2.7 10.6L4.3 12.1L7.3 9.3" fill="none" stroke="#606060" stroke-width="1.2"/></svg>
<div class="t" style="left:99.40px;top:187.90px;font-size:14.5px;font-weight:400;color:#111;transform-origin:0 13.12px;">[TEST_CASE_NAME] TrafficjamEnd_EmergencyBrake</div>
<div class="t" style="left:654.70px;top:187.90px;width:100px;text-align:center;font-size:14.5px;font-weight:400;color:#111;transform-origin:0 13.12px;"><svg width="8.064" height="10.379" viewBox="0 0 1139 1466" style="vertical-align:baseline;overflow:visible"><path d="M763 0H583V1147Q518 1085 412 1023Q306 961 223 930V1104Q373 1175 486 1276Q599 1377 646 1466H763Z" transform="matrix(1 0 0 -1 0 1466)" fill="currentColor"/></svg></div>
<div class="t" style="left:834.20px;top:187.90px;width:100px;text-align:center;font-size:14.5px;font-weight:400;color:#f0a030;transform-origin:0 13.12px;"><svg width="8.064" height="10.379" viewBox="0 0 1139 1466" style="vertical-align:baseline;overflow:visible"><path d="M763 0H583V1147Q518 1085 412 1023Q306 961 223 930V1104Q373 1175 486 1276Q599 1377 646 1466H763Z" transform="matrix(1 0 0 -1 0 1466)" fill="currentColor"/></svg></div>
<div class="t" style="left:1014.00px;top:187.90px;width:100px;text-align:center;font-size:14.5px;font-weight:400;color:#111;transform-origin:0 13.12px;"><svg width="8.064" height="10.379" viewBox="0 0 1139 1466" style="vertical-align:baseline;overflow:visible"><path d="M763 0H583V1147Q518 1085 412 1023Q306 961 223 930V1104Q373 1175 486 1276Q599 1377 646 1466H763Z" transform="matrix(1 0 0 -1 0 1466)" fill="currentColor"/></svg></div>
<div class="t" style="left:1184.00px;top:188.20px;width:120px;text-align:center;font-size:14.5px;font-weight:700;color:#d9596c;transform-origin:0 13.12px;">FAILED</div>
<div class="a" style="left:1333.80px;top:188.72px;width:179.20px;height:16.00px;background:#f8dfe2;border:1px solid #d9606d;border-radius:2px;box-sizing:border-box;"></div>
<div class="t" style="left:1403.40px;top:188.80px;width:40px;text-align:center;font-size:14.5px;font-weight:400;color:#111;transform-origin:0 13.12px;">F</div>
<div class="a" style="left:39.40px;top:208.26px;width:1.30px;height:11.57px;background:#c4c4c4;"></div>
<div class="a" style="left:39.40px;top:219.83px;width:1.30px;height:12.87px;background:#c4c4c4;"></div>
<svg class="a" style="left:35.70px;top:215.23px" width="10" height="9" viewBox="0 0 10 9"><rect x="0.6" y="0.6" width="8" height="7" rx="1.8" fill="#fff" stroke="#9a9a9a" stroke-width="1.1"/><rect x="2.4" y="3.2" width="4.4" height="1.6" fill="#333"/></svg>
<div class="a" style="left:45.40px;top:220.33px;width:1.20px;height:1.00px;background:#bbb;"></div>
<svg class="a" style="left:49.20px;top:209.53px" width="10" height="14.5" viewBox="0 0 10 14.5"><path d="M0.65 3.2V13.1Q0.65 14 1.5 14H8.5Q9.35 14 9.35 13.1V3.2H0.65" fill="#fff" stroke="#f0a838" stroke-width="1.25"/><path d="M2.1 4.3Q2.1 0.9 5 0.9Q7.9 0.9 7.9 4.3" fill="#fff" stroke="#959595" stroke-width="1.1"/><rect x="2.9" y="3.6" width="4.2" height="1.1" fill="#f2b03c"/><path d="M2.7 7L4.3 8.5L7.3 5.7M2.7 10.6L4.3 12.1L7.3 9.3" fill="none" stroke="#606060" stroke-width="1.2"/></svg>
<div class="t" style="left:65.00px;top:211.04px;font-size:14.5px;font-weight:400;color:#111;transform-origin:0 13.12px;">[CONSTANT] SOP='22-09'</div>
<div class="t" style="left:654.70px;top:211.04px;width:100px;text-align:center;font-size:14.5px;font-weight:400;color:#111;transform-origin:0 13.12px;">5</div>
<div class="t" style="left:834.20px;top:211.04px;width:100px;text-align:center;font-size:14.5px;font-weight:400;color:#111;transform-origin:0 13.12px;">20</div>
<div class="t" style="left:1014.00px;top:211.04px;width:100px;text-align:center;font-size:14.5px;font-weight:400;color:#111;transform-origin:0 13.12px;"><svg width="8.064" height="10.379" viewBox="0 0 1139 1466" style="vertical-align:baseline;overflow:visible"><path d="M763 0H583V1147Q518 1085 412 1023Q306 961 223 930V1104Q373 1175 486 1276Q599 1377 646 1466H763Z" transform="matrix(1 0 0 -1 0 1466)" fill="currentColor"/></svg></div>
<div class="t" style="left:1184.00px;top:211.34px;width:120px;text-align:center;font-size:14.5px;font-weight:700;color:#d9596c;transform-origin:0 13.12px;">FAILED</div>
<div class="a" style="left:1333.80px;top:209.66px;width:143.20px;height:2.00px;background:#2a9d3c;"></div>
<div class="a" style="left:1477.00px;top:209.66px;width:36.00px;height:2.00px;background:#d9505e;"></div>
<div class="a" style="left:1333.80px;top:212.66px;width:179.20px;height:13.60px;background:#2088a2;"></div>
<div class="t" style="left:1333.40px;top:213.30px;width:180px;text-align:center;font-size:11px;font-weight:400;color:#f4f8fa;transform-origin:0 9.96px;"><svg width="6.118" height="7.874" viewBox="0 0 1139 1466" style="vertical-align:baseline;overflow:visible"><path d="M763 0H583V1147Q518 1085 412 1023Q306 961 223 930V1104Q373 1175 486 1276Q599 1377 646 1466H763Z" transform="matrix(1 0 0 -1 0 1466)" fill="currentColor"/></svg>00% (5/5)</div>
<div class="a" style="left:39.40px;top:231.40px;width:1.30px;height:23.34px;background:#c4c4c4;"></div>
<div class="a" style="left:55.70px;top:231.40px;width:1.30px;height:11.57px;background:#c4c4c4;"></div>
<svg class="a" style="left:52.00px;top:238.37px" width="10" height="9" viewBox="0 0 10 9"><rect x="0.6" y="0.6" width="8" height="7" rx="1.8" fill="#fff" stroke="#9a9a9a" stroke-width="1.1"/><rect x="2.4" y="3.2" width="4.4" height="1.6" fill="#333"/></svg>
<div class="a" style="left:61.70px;top:243.47px;width:1.20px;height:1.00px;background:#bbb;"></div>
<svg class="a" style="left:65.40px;top:232.67px" width="10" height="14.5" viewBox="0 0 10 14.5"><path d="M0.65 3.2V13.1Q0.65 14 1.5 14H8.5Q9.35 14 9.35 13.1V3.2H0.65" fill="#fff" stroke="#f0a838" stroke-width="1.25"/><path d="M2.1 4.3Q2.1 0.9 5 0.9Q7.9 0.9 7.9 4.3" fill="#fff" stroke="#959595" stroke-width="1.1"/><rect x="2.9" y="3.6" width="4.2" height="1.1" fill="#f2b03c"/><path d="M2.7 7L4.3 8.5L7.3 5.7M2.7 10.6L4.3 12.1L7.3 9.3" fill="none" stroke="#606060" stroke-width="1.2"/></svg>
<div class="t" style="left:81.40px;top:234.18px;font-size:14.5px;font-weight:400;color:#111;transform-origin:0 13.12px;">[ATTRIBUTE] ReqId=<svg width="8.064" height="10.379" viewBox="0 0 1139 1466" style="vertical-align:baseline;overflow:visible"><path d="M763 0H583V1147Q518 1085 412 1023Q306 961 223 930V1104Q373 1175 486 1276Q599 1377 646 1466H763Z" transform="matrix(1 0 0 -1 0 1466)" fill="currentColor"/></svg></div>
<div class="t" style="left:654.70px;top:234.18px;width:100px;text-align:center;font-size:14.5px;font-weight:400;color:#111;transform-origin:0 13.12px;">5</div>
<div class="t" style="left:834.20px;top:234.18px;width:100px;text-align:center;font-size:14.5px;font-weight:400;color:#111;transform-origin:0 13.12px;">20</div>
<div class="t" style="left:1014.00px;top:234.18px;width:100px;text-align:center;font-size:14.5px;font-weight:400;color:#111;transform-origin:0 13.12px;"><svg width="8.064" height="10.379" viewBox="0 0 1139 1466" style="vertical-align:baseline;overflow:visible"><path d="M763 0H583V1147Q518 1085 412 1023Q306 961 223 930V1104Q373 1175 486 1276Q599 1377 646 1466H763Z" transform="matrix(1 0 0 -1 0 1466)" fill="currentColor"/></svg></div>
<div class="t" style="left:1184.00px;top:234.48px;width:120px;text-align:center;font-size:14.5px;font-weight:700;color:#d9596c;transform-origin:0 13.12px;">FAILED</div>
<div class="a" style="left:1333.80px;top:232.80px;width:143.20px;height:2.00px;background:#2a9d3c;"></div>
<div class="a" style="left:1477.00px;top:232.80px;width:36.00px;height:2.00px;background:#d9505e;"></div>
<div class="a" style="left:1333.80px;top:235.80px;width:179.20px;height:13.60px;background:#2088a2;"></div>
<div class="t" style="left:1333.40px;top:236.44px;width:180px;text-align:center;font-size:11px;font-weight:400;color:#f4f8fa;transform-origin:0 9.96px;"><svg width="6.118" height="7.874" viewBox="0 0 1139 1466" style="vertical-align:baseline;overflow:visible"><path d="M763 0H583V1147Q518 1085 412 1023Q306 961 223 930V1104Q373 1175 486 1276Q599 1377 646 1466H763Z" transform="matrix(1 0 0 -1 0 1466)" fill="currentColor"/></svg>00% (5/5)</div>
<div class="a" style="left:39.40px;top:254.54px;width:1.30px;height:23.34px;background:#c4c4c4;"></div>
<div class="a" style="left:72.10px;top:254.54px;width:1.30px;height:11.37px;background:#c4c4c4;"></div>
<div class="a" style="left:72.10px;top:265.01px;width:8.50px;height:1.20px;background:#c4c4c4;"></div>
<div class="a" style="left:72.10px;top:265.01px;width:1.30px;height:12.87px;background:#c4c4c4;"></div>
<svg class="a" style="left:83.40px;top:255.81px" width="10" height="14.5" viewBox="0 0 10 14.5"><path d="M0.65 3.2V13.1Q0.65 14 1.5 14H8.5Q9.35 14 9.35 13.1V3.2H0.65" fill="#fff" stroke="#f0a838" stroke-width="1.25"/><path d="M2.1 4.3Q2.1 0.9 5 0.9Q7.9 0.9 7.9 4.3" fill="#fff" stroke="#959595" stroke-width="1.1"/><rect x="2.9" y="3.6" width="4.2" height="1.1" fill="#f2b03c"/><path d="M2.7 7L4.3 8.5L7.3 5.7M2.7 10.6L4.3 12.1L7.3 9.3" fill="none" stroke="#606060" stroke-width="1.2"/></svg>
<div class="t" style="left:99.40px;top:257.32px;font-size:14.5px;font-weight:400;color:#111;transform-origin:0 13.12px;">[TEST_CASE_NAME] Highway_ACC_<svg width="8.064" height="10.379" viewBox="0 0 1139 1466" style="vertical-align:baseline;overflow:visible"><path d="M763 0H583V1147Q518 1085 412 1023Q306 961 223 930V1104Q373 1175 486 1276Q599 1377 646 1466H763Z" transform="matrix(1 0 0 -1 0 1466)" fill="currentColor"/></svg></div>
<div class="t" style="left:654.70px;top:257.32px;width:100px;text-align:center;font-size:14.5px;font-weight:400;color:#111;transform-origin:0 13.12px;"><svg width="8.064" height="10.379" viewBox="0 0 1139 1466" style="vertical-align:baseline;overflow:visible"><path d="M763 0H583V1147Q518 1085 412 1023Q306 961 223 930V1104Q373 1175 486 1276Q599 1377 646 1466H763Z" transform="matrix(1 0 0 -1 0 1466)" fill="currentColor"/></svg></div>
<div class="t" style="left:834.20px;top:257.32px;width:100px;text-align:center;font-size:14.5px;font-weight:400;color:#f0a030;transform-origin:0 13.12px;">3</div>
<div class="t" style="left:1014.00px;top:257.32px;width:100px;text-align:center;font-size:14.5px;font-weight:400;color:#111;transform-origin:0 13.12px;"><svg width="8.064" height="10.379" viewBox="0 0 1139 1466" style="vertical-align:baseline;overflow:visible"><path d="M763 0H583V1147Q518 1085 412 1023Q306 961 223 930V1104Q373 1175 486 1276Q599 1377 646 1466H763Z" transform="matrix(1 0 0 -1 0 1466)" fill="currentColor"/></svg></div>
<div class="t" style="left:1184.00px;top:257.62px;width:120px;text-align:center;font-size:14.5px;font-weight:700;color:#2d7d32;transform-origin:0 13.12px;">PASSED</div>
<div class="a" style="left:1333.80px;top:258.14px;width:179.20px;height:16.00px;background:#d4e4d4;border:1px solid #3b8f46;border-radius:2px;box-sizing:border-box;"></div>
<div class="t" style="left:1403.40px;top:258.22px;width:40px;text-align:center;font-size:14.5px;font-weight:400;color:#111;transform-origin:0 13.12px;">P</div>
<div class="a" style="left:39.40px;top:277.68px;width:1.30px;height:23.34px;background:#c4c4c4;"></div>
<div class="a" style="left:72.10px;top:277.68px;width:1.30px;height:11.37px;background:#c4c4c4;"></div>
<div class="a" style="left:72.10px;top:288.15px;width:8.50px;height:1.20px;background:#c4c4c4;"></div>
<div class="a" style="left:72.10px;top:288.15px;width:1.30px;height:12.87px;background:#c4c4c4;"></div>
<svg class="a" style="left:83.40px;top:278.95px" width="10" height="14.5" viewBox="0 0 10 14.5"><path d="M0.65 3.2V13.1Q0.65 14 1.5 14H8.5Q9.35 14 9.35 13.1V3.2H0.65" fill="#fff" stroke="#f0a838" stroke-width="1.25"/><path d="M2.1 4.3Q2.1 0.9 5 0.9Q7.9 0.9 7.9 4.3" fill="#fff" stroke="#959595" stroke-width="1.1"/><rect x="2.9" y="3.6" width="4.2" height="1.1" fill="#f2b03c"/><path d="M2.7 7L4.3 8.5L7.3 5.7M2.7 10.6L4.3 12.1L7.3 9.3" fill="none" stroke="#606060" stroke-width="1.2"/></svg>
<div class="t" style="left:99.40px;top:280.46px;font-size:14.5px;font-weight:400;color:#111;transform-origin:0 13.12px;">[TEST_CASE_NAME] Highway_ACC_2</div>
<div class="t" style="left:654.70px;top:280.46px;width:100px;text-align:center;font-size:14.5px;font-weight:400;color:#111;transform-origin:0 13.12px;"><svg width="8.064" height="10.379" viewBox="0 0 1139 1466" style="vertical-align:baseline;overflow:visible"><path d="M763 0H583V1147Q518 1085 412 1023Q306 961 223 930V1104Q373 1175 486 1276Q599 1377 646 1466H763Z" transform="matrix(1 0 0 -1 0 1466)" fill="currentColor"/></svg></div>
<div class="t" style="left:834.20px;top:280.46px;width:100px;text-align:center;font-size:14.5px;font-weight:400;color:#f0a030;transform-origin:0 13.12px;">2</div>
<div class="t" style="left:1014.00px;top:280.46px;width:100px;text-align:center;font-size:14.5px;font-weight:400;color:#111;transform-origin:0 13.12px;"><svg width="8.064" height="10.379" viewBox="0 0 1139 1466" style="vertical-align:baseline;overflow:visible"><path d="M763 0H583V1147Q518 1085 412 1023Q306 961 223 930V1104Q373 1175 486 1276Q599 1377 646 1466H763Z" transform="matrix(1 0 0 -1 0 1466)" fill="currentColor"/></svg></div>
<div class="t" style="left:1184.00px;top:280.76px;width:120px;text-align:center;font-size:14.5px;font-weight:700;color:#d9596c;transform-origin:0 13.12px;">FAILED</div>
<div class="a" style="left:1333.80px;top:281.28px;width:179.20px;height:16.00px;background:#f8dfe2;border:1px solid #d9606d;border-radius:2px;box-sizing:border-box;"></div>
<div class="t" style="left:1403.40px;top:281.36px;width:40px;text-align:center;font-size:14.5px;font-weight:400;color:#111;transform-origin:0 13.12px;">F</div>
<div class="a" style="left:39.40px;top:300.82px;width:1.30px;height:23.34px;background:#c4c4c4;"></div>
<div class="a" style="left:72.10px;top:300.82px;width:1.30px;height:11.37px;background:#c4c4c4;"></div>
<div class="a" style="left:72.10px;top:311.29px;width:8.50px;height:1.20px;background:#c4c4c4;"></div>
<div class="a" style="left:72.10px;top:311.29px;width:1.30px;height:12.87px;background:#c4c4c4;"></div>
<svg class="a" style="left:83.40px;top:302.09px" width="10" height="14.5" viewBox="0 0 10 14.5"><path d="M0.65 3.2V13.1Q0.65 14 1.5 14H8.5Q9.35 14 9.35 13.1V3.2H0.65" fill="#fff" stroke="#f0a838" stroke-width="1.25"/><path d="M2.1 4.3Q2.1 0.9 5 0.9Q7.9 0.9 7.9 4.3" fill="#fff" stroke="#959595" stroke-width="1.1"/><rect x="2.9" y="3.6" width="4.2" height="1.1" fill="#f2b03c"/><path d="M2.7 7L4.3 8.5L7.3 5.7M2.7 10.6L4.3 12.1L7.3 9.3" fill="none" stroke="#606060" stroke-width="1.2"/></svg>
<div class="t" style="left:99.40px;top:303.60px;font-size:14.5px;font-weight:400;color:#111;transform-origin:0 13.12px;">[TEST_CASE_NAME] Highway_ACC_3</div>
<div class="t" style="left:654.70px;top:303.60px;width:100px;text-align:center;font-size:14.5px;font-weight:400;color:#111;transform-origin:0 13.12px;"><svg width="8.064" height="10.379" viewBox="0 0 1139 1466" style="vertical-align:baseline;overflow:visible"><path d="M763 0H583V1147Q518 1085 412 1023Q306 961 223 930V1104Q373 1175 486 1276Q599 1377 646 1466H763Z" transform="matrix(1 0 0 -1 0 1466)" fill="currentColor"/></svg></div>
<div class="t" style="left:834.20px;top:303.60px;width:100px;text-align:center;font-size:14.5px;font-weight:400;color:#f0a030;transform-origin:0 13.12px;">4</div>
<div class="t" style="left:1014.00px;top:303.60px;width:100px;text-align:center;font-size:14.5px;font-weight:400;color:#111;transform-origin:0 13.12px;"><svg width="8.064" height="10.379" viewBox="0 0 1139 1466" style="vertical-align:baseline;overflow:visible"><path d="M763 0H583V1147Q518 1085 412 1023Q306 961 223 930V1104Q373 1175 486 1276Q599 1377 646 1466H763Z" transform="matrix(1 0 0 -1 0 1466)" fill="currentColor"/></svg></div>
<div class="t" style="left:1184.00px;top:303.90px;width:120px;text-align:center;font-size:14.5px;font-weight:700;color:#2d7d32;transform-origin:0 13.12px;">PASSED</div>
<div class="a" style="left:1333.80px;top:304.42px;width:179.20px;height:16.00px;background:#d4e4d4;border:1px solid #3b8f46;border-radius:2px;box-sizing:border-box;"></div>
<div class="t" style="left:1403.40px;top:304.50px;width:40px;text-align:center;font-size:14.5px;font-weight:400;color:#111;transform-origin:0 13.12px;">P</div>
<div class="a" style="left:39.40px;top:323.96px;width:1.30px;height:23.34px;background:#c4c4c4;"></div>
<div class="a" style="left:72.10px;top:323.96px;width:1.30px;height:11.37px;background:#c4c4c4;"></div>
<div class="a" style="left:72.10px;top:334.43px;width:8.50px;height:1.20px;background:#c4c4c4;"></div>
<div class="a" style="left:72.10px;top:334.43px;width:1.30px;height:12.87px;background:#c4c4c4;"></div>
<svg class="a" style="left:83.40px;top:325.23px" width="10" height="14.5" viewBox="0 0 10 14.5"><path d="M0.65 3.2V13.1Q0.65 14 1.5 14H8.5Q9.35 14 9.35 13.1V3.2H0.65" fill="#fff" stroke="#f0a838" stroke-width="1.25"/><path d="M2.1 4.3Q2.1 0.9 5 0.9Q7.9 0.9 7.9 4.3" fill="#fff" stroke="#959595" stroke-width="1.1"/><rect x="2.9" y="3.6" width="4.2" height="1.1" fill="#f2b03c"/><path d="M2.7 7L4.3 8.5L7.3 5.7M2.7 10.6L4.3 12.1L7.3 9.3" fill="none" stroke="#606060" stroke-width="1.2"/></svg>
<div class="t" style="left:99.40px;top:326.74px;font-size:14.5px;font-weight:400;color:#111;transform-origin:0 13.12px;">[TEST_CASE_NAME] Highway_ACC_4</div>
<div class="t" style="left:654.70px;top:326.74px;width:100px;text-align:center;font-size:14.5px;font-weight:400;color:#111;transform-origin:0 13.12px;"><svg width="8.064" height="10.379" viewBox="0 0 1139 1466" style="vertical-align:baseline;overflow:visible"><path d="M763 0H583V1147Q518 1085 412 1023Q306 961 223 930V1104Q373 1175 486 1276Q599 1377 646 1466H763Z" transform="matrix(1 0 0 -1 0 1466)" fill="currentColor"/></svg></div>
<div class="t" style="left:834.20px;top:326.74px;width:100px;text-align:center;font-size:14.5px;font-weight:400;color:#f0a030;transform-origin:0 13.12px;">3</div>
<div class="t" style="left:1014.00px;top:326.74px;width:100px;text-align:center;font-size:14.5px;font-weight:400;color:#111;transform-origin:0 13.12px;"><svg width="8.064" height="10.379" viewBox="0 0 1139 1466" style="vertical-align:baseline;overflow:visible"><path d="M763 0H583V1147Q518 1085 412 1023Q306 961 223 930V1104Q373 1175 486 1276Q599 1377 646 1466H763Z" transform="matrix(1 0 0 -1 0 1466)" fill="currentColor"/></svg></div>
<div class="t" style="left:1184.00px;top:327.04px;width:120px;text-align:center;font-size:14.5px;font-weight:700;color:#2d7d32;transform-origin:0 13.12px;">PASSED</div>
<div class="a" style="left:1333.80px;top:327.56px;width:179.20px;height:16.00px;background:#d4e4d4;border:1px solid #3b8f46;border-radius:2px;box-sizing:border-box;"></div>
<div class="t" style="left:1403.40px;top:327.64px;width:40px;text-align:center;font-size:14.5px;font-weight:400;color:#111;transform-origin:0 13.12px;">P</div>
<div class="a" style="left:39.40px;top:347.10px;width:1.30px;height:23.34px;background:#c4c4c4;"></div>
<div class="a" style="left:72.10px;top:347.10px;width:1.30px;height:11.37px;background:#c4c4c4;"></div>
<div class="a" style="left:72.10px;top:357.57px;width:8.50px;height:1.20px;background:#c4c4c4;"></div>
<svg class="a" style="left:83.40px;top:348.37px" width="10" height="14.5" viewBox="0 0 10 14.5"><path d="M0.65 3.2V13.1Q0.65 14 1.5 14H8.5Q9.35 14 9.35 13.1V3.2H0.65" fill="#fff" stroke="#f0a838" stroke-width="1.25"/><path d="M2.1 4.3Q2.1 0.9 5 0.9Q7.9 0.9 7.9 4.3" fill="#fff" stroke="#959595" stroke-width="1.1"/><rect x="2.9" y="3.6" width="4.2" height="1.1" fill="#f2b03c"/><path d="M2.7 7L4.3 8.5L7.3 5.7M2.7 10.6L4.3 12.1L7.3 9.3" fill="none" stroke="#606060" stroke-width="1.2"/></svg>
<div class="t" style="left:99.40px;top:349.88px;font-size:14.5px;font-weight:400;color:#111;transform-origin:0 13.12px;">[TEST_CASE_NAME] Highway_ACC_5</div>
<div class="t" style="left:654.70px;top:349.88px;width:100px;text-align:center;font-size:14.5px;font-weight:400;color:#111;transform-origin:0 13.12px;"><svg width="8.064" height="10.379" viewBox="0 0 1139 1466" style="vertical-align:baseline;overflow:visible"><path d="M763 0H583V1147Q518 1085 412 1023Q306 961 223 930V1104Q373 1175 486 1276Q599 1377 646 1466H763Z" transform="matrix(1 0 0 -1 0 1466)" fill="currentColor"/></svg></div>
<div class="t" style="left:834.20px;top:349.88px;width:100px;text-align:center;font-size:14.5px;font-weight:400;color:#f0a030;transform-origin:0 13.12px;">8</div>
<div class="t" style="left:1014.00px;top:349.88px;width:100px;text-align:center;font-size:14.5px;font-weight:400;color:#111;transform-origin:0 13.12px;"><svg width="8.064" height="10.379" viewBox="0 0 1139 1466" style="vertical-align:baseline;overflow:visible"><path d="M763 0H583V1147Q518 1085 412 1023Q306 961 223 930V1104Q373 1175 486 1276Q599 1377 646 1466H763Z" transform="matrix(1 0 0 -1 0 1466)" fill="currentColor"/></svg></div>
<div class="t" style="left:1184.00px;top:350.18px;width:120px;text-align:center;font-size:14.5px;font-weight:700;color:#2d7d32;transform-origin:0 13.12px;">PASSED</div>
<div class="a" style="left:1333.80px;top:350.70px;width:179.20px;height:16.00px;background:#d4e4d4;border:1px solid #3b8f46;border-radius:2px;box-sizing:border-box;"></div>
<div class="t" style="left:1403.40px;top:350.78px;width:40px;text-align:center;font-size:14.5px;font-weight:400;color:#111;transform-origin:0 13.12px;">P</div>
<div class="a" style="left:39.40px;top:370.24px;width:1.30px;height:11.57px;background:#c4c4c4;"></div>
<div class="a" style="left:39.40px;top:381.81px;width:1.30px;height:12.87px;background:#c4c4c4;"></div>
<svg class="a" style="left:35.70px;top:377.21px" width="10" height="9" viewBox="0 0 10 9"><rect x="0.6" y="0.6" width="8" height="7" rx="1.8" fill="#fff" stroke="#9a9a9a" stroke-width="1.1"/><rect x="2.4" y="3.2" width="4.4" height="1.6" fill="#333"/></svg>
<div class="a" style="left:45.40px;top:382.31px;width:1.20px;height:1.00px;background:#bbb;"></div>
<svg class="a" style="left:49.20px;top:371.51px" width="10" height="14.5" viewBox="0 0 10 14.5"><path d="M0.65 3.2V13.1Q0.65 14 1.5 14H8.5Q9.35 14 9.35 13.1V3.2H0.65" fill="#fff" stroke="#f0a838" stroke-width="1.25"/><path d="M2.1 4.3Q2.1 0.9 5 0.9Q7.9 0.9 7.9 4.3" fill="#fff" stroke="#959595" stroke-width="1.1"/><rect x="2.9" y="3.6" width="4.2" height="1.1" fill="#f2b03c"/><path d="M2.7 7L4.3 8.5L7.3 5.7M2.7 10.6L4.3 12.1L7.3 9.3" fill="none" stroke="#606060" stroke-width="1.2"/></svg>
<div class="t" style="left:65.00px;top:373.02px;font-size:14.5px;font-weight:400;color:#111;transform-origin:0 13.12px;">[CONSTANT] SOP='27-05'</div>
<div class="t" style="left:654.70px;top:373.02px;width:100px;text-align:center;font-size:14.5px;font-weight:400;color:#111;transform-origin:0 13.12px;">2</div>
<div class="t" style="left:834.20px;top:373.02px;width:100px;text-align:center;font-size:14.5px;font-weight:400;color:#111;transform-origin:0 13.12px;">94</div>
<div class="t" style="left:1014.00px;top:373.02px;width:100px;text-align:center;font-size:14.5px;font-weight:400;color:#111;transform-origin:0 13.12px;"><svg width="8.064" height="10.379" viewBox="0 0 1139 1466" style="vertical-align:baseline;overflow:visible"><path d="M763 0H583V1147Q518 1085 412 1023Q306 961 223 930V1104Q373 1175 486 1276Q599 1377 646 1466H763Z" transform="matrix(1 0 0 -1 0 1466)" fill="currentColor"/></svg></div>
<div class="t" style="left:1184.00px;top:373.32px;width:120px;text-align:center;font-size:14.5px;font-weight:700;color:#d9596c;transform-origin:0 13.12px;">FAILED</div>
<div class="a" style="left:1333.80px;top:371.64px;width:90.00px;height:2.00px;background:#2a9d3c;"></div>
<div class="a" style="left:1423.80px;top:371.64px;width:89.20px;height:2.00px;background:#d9505e;"></div>
<div class="a" style="left:1333.80px;top:374.64px;width:179.20px;height:13.60px;background:#2088a2;"></div>
<div class="t" style="left:1333.40px;top:375.29px;width:180px;text-align:center;font-size:11px;font-weight:400;color:#f4f8fa;transform-origin:0 9.96px;"><svg width="6.118" height="7.874" viewBox="0 0 1139 1466" style="vertical-align:baseline;overflow:visible"><path d="M763 0H583V1147Q518 1085 412 1023Q306 961 223 930V1104Q373 1175 486 1276Q599 1377 646 1466H763Z" transform="matrix(1 0 0 -1 0 1466)" fill="currentColor"/></svg>00% (2/2)</div>
<div class="a" style="left:39.40px;top:393.38px;width:1.30px;height:23.34px;background:#c4c4c4;"></div>
<div class="a" style="left:55.70px;top:393.38px;width:1.30px;height:11.57px;background:#c4c4c4;"></div>
<div class="a" style="left:55.70px;top:404.95px;width:1.30px;height:12.87px;background:#c4c4c4;"></div>
<svg class="a" style="left:52.00px;top:400.35px" width="10" height="9" viewBox="0 0 10 9"><rect x="0.6" y="0.6" width="8" height="7" rx="1.8" fill="#fff" stroke="#9a9a9a" stroke-width="1.1"/><rect x="2.4" y="3.2" width="4.4" height="1.6" fill="#333"/></svg>
<div class="a" style="left:61.70px;top:405.45px;width:1.20px;height:1.00px;background:#bbb;"></div>
<svg class="a" style="left:65.40px;top:394.65px" width="10" height="14.5" viewBox="0 0 10 14.5"><path d="M0.65 3.2V13.1Q0.65 14 1.5 14H8.5Q9.35 14 9.35 13.1V3.2H0.65" fill="#fff" stroke="#f0a838" stroke-width="1.25"/><path d="M2.1 4.3Q2.1 0.9 5 0.9Q7.9 0.9 7.9 4.3" fill="#fff" stroke="#959595" stroke-width="1.1"/><rect x="2.9" y="3.6" width="4.2" height="1.1" fill="#f2b03c"/><path d="M2.7 7L4.3 8.5L7.3 5.7M2.7 10.6L4.3 12.1L7.3 9.3" fill="none" stroke="#606060" stroke-width="1.2"/></svg>
<div class="t" style="left:81.40px;top:396.16px;font-size:14.5px;font-weight:400;color:#111;transform-origin:0 13.12px;">[ATTRIBUTE] ReqId=2</div>
<div class="t" style="left:654.70px;top:396.16px;width:100px;text-align:center;font-size:14.5px;font-weight:400;color:#111;transform-origin:0 13.12px;"><svg width="8.064" height="10.379" viewBox="0 0 1139 1466" style="vertical-align:baseline;overflow:visible"><path d="M763 0H583V1147Q518 1085 412 1023Q306 961 223 930V1104Q373 1175 486 1276Q599 1377 646 1466H763Z" transform="matrix(1 0 0 -1 0 1466)" fill="currentColor"/></svg></div>
<div class="t" style="left:834.20px;top:396.16px;width:100px;text-align:center;font-size:14.5px;font-weight:400;color:#111;transform-origin:0 13.12px;">45</div>
<div class="t" style="left:1014.00px;top:396.16px;width:100px;text-align:center;font-size:14.5px;font-weight:400;color:#111;transform-origin:0 13.12px;"><svg width="8.064" height="10.379" viewBox="0 0 1139 1466" style="vertical-align:baseline;overflow:visible"><path d="M763 0H583V1147Q518 1085 412 1023Q306 961 223 930V1104Q373 1175 486 1276Q599 1377 646 1466H763Z" transform="matrix(1 0 0 -1 0 1466)" fill="currentColor"/></svg></div>
<div class="t" style="left:1184.00px;top:396.46px;width:120px;text-align:center;font-size:14.5px;font-weight:700;color:#d9596c;transform-origin:0 13.12px;">FAILED</div>
<div class="a" style="left:1333.80px;top:394.78px;width:83.60px;height:2.00px;background:#2a9d3c;"></div>
<div class="a" style="left:1417.40px;top:394.78px;width:95.60px;height:2.00px;background:#d9505e;"></div>
<div class="a" style="left:1333.80px;top:397.78px;width:179.20px;height:13.60px;background:#2088a2;"></div>
<div class="t" style="left:1333.40px;top:398.43px;width:180px;text-align:center;font-size:11px;font-weight:400;color:#f4f8fa;transform-origin:0 9.96px;"><svg width="6.118" height="7.874" viewBox="0 0 1139 1466" style="vertical-align:baseline;overflow:visible"><path d="M763 0H583V1147Q518 1085 412 1023Q306 961 223 930V1104Q373 1175 486 1276Q599 1377 646 1466H763Z" transform="matrix(1 0 0 -1 0 1466)" fill="currentColor"/></svg>00% (<svg width="6.118" height="7.874" viewBox="0 0 1139 1466" style="vertical-align:baseline;overflow:visible"><path d="M763 0H583V1147Q518 1085 412 1023Q306 961 223 930V1104Q373 1175 486 1276Q599 1377 646 1466H763Z" transform="matrix(1 0 0 -1 0 1466)" fill="currentColor"/></svg>/<svg width="6.118" height="7.874" viewBox="0 0 1139 1466" style="vertical-align:baseline;overflow:visible"><path d="M763 0H583V1147Q518 1085 412 1023Q306 961 223 930V1104Q373 1175 486 1276Q599 1377 646 1466H763Z" transform="matrix(1 0 0 -1 0 1466)" fill="currentColor"/></svg>)</div>
<div class="a" style="left:39.40px;top:416.52px;width:1.30px;height:23.34px;background:#c4c4c4;"></div>
<div class="a" style="left:55.70px;top:416.52px;width:1.30px;height:23.34px;background:#c4c4c4;"></div>
<div class="a" style="left:72.10px;top:416.52px;width:1.30px;height:11.37px;background:#c4c4c4;"></div>
<div class="a" style="left:72.10px;top:426.99px;width:8.50px;height:1.20px;background:#c4c4c4;"></div>
<svg class="a" style="left:83.40px;top:417.79px" width="10" height="14.5" viewBox="0 0 10 14.5"><path d="M0.65 3.2V13.1Q0.65 14 1.5 14H8.5Q9.35 14 9.35 13.1V3.2H0.65" fill="#fff" stroke="#f0a838" stroke-width="1.25"/><path d="M2.1 4.3Q2.1 0.9 5 0.9Q7.9 0.9 7.9 4.3" fill="#fff" stroke="#959595" stroke-width="1.1"/><rect x="2.9" y="3.6" width="4.2" height="1.1" fill="#f2b03c"/><path d="M2.7 7L4.3 8.5L7.3 5.7M2.7 10.6L4.3 12.1L7.3 9.3" fill="none" stroke="#606060" stroke-width="1.2"/></svg>
<div class="t" style="left:99.40px;top:419.30px;font-size:14.5px;font-weight:400;color:#111;transform-origin:0 13.12px;">[TEST_CASE_NAME] TrafficjamEnd_EmergencyBrake</div>
<div class="t" style="left:654.70px;top:419.30px;width:100px;text-align:center;font-size:14.5px;font-weight:400;color:#111;transform-origin:0 13.12px;"><svg width="8.064" height="10.379" viewBox="0 0 1139 1466" style="vertical-align:baseline;overflow:visible"><path d="M763 0H583V1147Q518 1085 412 1023Q306 961 223 930V1104Q373 1175 486 1276Q599 1377 646 1466H763Z" transform="matrix(1 0 0 -1 0 1466)" fill="currentColor"/></svg></div>
<div class="t" style="left:834.20px;top:419.30px;width:100px;text-align:center;font-size:14.5px;font-weight:400;color:#f0a030;transform-origin:0 13.12px;">45</div>
<div class="t" style="left:1014.00px;top:419.30px;width:100px;text-align:center;font-size:14.5px;font-weight:400;color:#111;transform-origin:0 13.12px;"><svg width="8.064" height="10.379" viewBox="0 0 1139 1466" style="vertical-align:baseline;overflow:visible"><path d="M763 0H583V1147Q518 1085 412 1023Q306 961 223 930V1104Q373 1175 486 1276Q599 1377 646 1466H763Z" transform="matrix(1 0 0 -1 0 1466)" fill="currentColor"/></svg></div>
<div class="t" style="left:1184.00px;top:419.60px;width:120px;text-align:center;font-size:14.5px;font-weight:700;color:#d9596c;transform-origin:0 13.12px;">FAILED</div>
<div class="a" style="left:1333.80px;top:420.12px;width:83.20px;height:16.00px;background:#d4e4d4;border:1px solid #3b8f46;border-radius:2px;box-sizing:border-box;"></div>
<div class="a" style="left:1417.40px;top:420.12px;width:95.60px;height:16.00px;background:#f8dfe2;border:1px solid #d9606d;border-radius:2px;box-sizing:border-box;"></div>
<div class="t" style="left:1355.40px;top:420.20px;width:40px;text-align:center;font-size:14.5px;font-weight:400;color:#111;transform-origin:0 13.12px;">P</div>
<div class="t" style="left:1445.00px;top:420.20px;width:40px;text-align:center;font-size:14.5px;font-weight:400;color:#111;transform-origin:0 13.12px;">F</div>
<div class="a" style="left:39.40px;top:439.66px;width:1.30px;height:23.34px;background:#c4c4c4;"></div>
<div class="a" style="left:55.70px;top:439.66px;width:1.30px;height:11.57px;background:#c4c4c4;"></div>
<svg class="a" style="left:52.00px;top:446.63px" width="10" height="9" viewBox="0 0 10 9"><rect x="0.6" y="0.6" width="8" height="7" rx="1.8" fill="#fff" stroke="#9a9a9a" stroke-width="1.1"/><rect x="2.4" y="3.2" width="4.4" height="1.6" fill="#333"/></svg>
<div class="a" style="left:61.70px;top:451.73px;width:1.20px;height:1.00px;background:#bbb;"></div>
<svg class="a" style="left:65.40px;top:440.93px" width="10" height="14.5" viewBox="0 0 10 14.5"><path d="M0.65 3.2V13.1Q0.65 14 1.5 14H8.5Q9.35 14 9.35 13.1V3.2H0.65" fill="#fff" stroke="#f0a838" stroke-width="1.25"/><path d="M2.1 4.3Q2.1 0.9 5 0.9Q7.9 0.9 7.9 4.3" fill="#fff" stroke="#959595" stroke-width="1.1"/><rect x="2.9" y="3.6" width="4.2" height="1.1" fill="#f2b03c"/><path d="M2.7 7L4.3 8.5L7.3 5.7M2.7 10.6L4.3 12.1L7.3 9.3" fill="none" stroke="#606060" stroke-width="1.2"/></svg>
<div class="t" style="left:81.40px;top:442.44px;font-size:14.5px;font-weight:400;color:#111;transform-origin:0 13.12px;">[ATTRIBUTE] ReqId=3</div>
<div class="t" style="left:654.70px;top:442.44px;width:100px;text-align:center;font-size:14.5px;font-weight:400;color:#111;transform-origin:0 13.12px;"><svg width="8.064" height="10.379" viewBox="0 0 1139 1466" style="vertical-align:baseline;overflow:visible"><path d="M763 0H583V1147Q518 1085 412 1023Q306 961 223 930V1104Q373 1175 486 1276Q599 1377 646 1466H763Z" transform="matrix(1 0 0 -1 0 1466)" fill="currentColor"/></svg></div>
<div class="t" style="left:834.20px;top:442.44px;width:100px;text-align:center;font-size:14.5px;font-weight:400;color:#111;transform-origin:0 13.12px;">49</div>
<div class="t" style="left:1014.00px;top:442.44px;width:100px;text-align:center;font-size:14.5px;font-weight:400;color:#111;transform-origin:0 13.12px;"><svg width="8.064" height="10.379" viewBox="0 0 1139 1466" style="vertical-align:baseline;overflow:visible"><path d="M763 0H583V1147Q518 1085 412 1023Q306 961 223 930V1104Q373 1175 486 1276Q599 1377 646 1466H763Z" transform="matrix(1 0 0 -1 0 1466)" fill="currentColor"/></svg></div>
<div class="t" style="left:1184.00px;top:442.74px;width:120px;text-align:center;font-size:14.5px;font-weight:700;color:#d9596c;transform-origin:0 13.12px;">FAILED</div>
<div class="a" style="left:1333.80px;top:441.06px;width:95.20px;height:2.00px;background:#2a9d3c;"></div>
<div class="a" style="left:1429.00px;top:441.06px;width:84.00px;height:2.00px;background:#d9505e;"></div>
<div class="a" style="left:1333.80px;top:444.06px;width:179.20px;height:13.60px;background:#2088a2;"></div>
<div class="t" style="left:1333.40px;top:444.71px;width:180px;text-align:center;font-size:11px;font-weight:400;color:#f4f8fa;transform-origin:0 9.96px;"><svg width="6.118" height="7.874" viewBox="0 0 1139 1466" style="vertical-align:baseline;overflow:visible"><path d="M763 0H583V1147Q518 1085 412 1023Q306 961 223 930V1104Q373 1175 486 1276Q599 1377 646 1466H763Z" transform="matrix(1 0 0 -1 0 1466)" fill="currentColor"/></svg>00% (<svg width="6.118" height="7.874" viewBox="0 0 1139 1466" style="vertical-align:baseline;overflow:visible"><path d="M763 0H583V1147Q518 1085 412 1023Q306 961 223 930V1104Q373 1175 486 1276Q599 1377 646 1466H763Z" transform="matrix(1 0 0 -1 0 1466)" fill="currentColor"/></svg>/<svg width="6.118" height="7.874" viewBox="0 0 1139 1466" style="vertical-align:baseline;overflow:visible"><path d="M763 0H583V1147Q518 1085 412 1023Q306 961 223 930V1104Q373 1175 486 1276Q599 1377 646 1466H763Z" transform="matrix(1 0 0 -1 0 1466)" fill="currentColor"/></svg>)</div>
<div class="a" style="left:39.40px;top:462.80px;width:1.30px;height:23.34px;background:#c4c4c4;"></div>
<div class="a" style="left:72.10px;top:462.80px;width:1.30px;height:11.37px;background:#c4c4c4;"></div>
<div class="a" style="left:72.10px;top:473.27px;width:8.50px;height:1.20px;background:#c4c4c4;"></div>
<svg class="a" style="left:83.40px;top:464.07px" width="10" height="14.5" viewBox="0 0 10 14.5"><path d="M0.65 3.2V13.1Q0.65 14 1.5 14H8.5Q9.35 14 9.35 13.1V3.2H0.65" fill="#fff" stroke="#f0a838" stroke-width="1.25"/><path d="M2.1 4.3Q2.1 0.9 5 0.9Q7.9 0.9 7.9 4.3" fill="#fff" stroke="#959595" stroke-width="1.1"/><rect x="2.9" y="3.6" width="4.2" height="1.1" fill="#f2b03c"/><path d="M2.7 7L4.3 8.5L7.3 5.7M2.7 10.6L4.3 12.1L7.3 9.3" fill="none" stroke="#606060" stroke-width="1.2"/></svg>
<div class="t" style="left:99.40px;top:465.58px;font-size:14.5px;font-weight:400;color:#111;transform-origin:0 13.12px;">[TEST_CASE_NAME] LaneChange_EmergencyBrake</div>
<div class="t" style="left:654.70px;top:465.58px;width:100px;text-align:center;font-size:14.5px;font-weight:400;color:#111;transform-origin:0 13.12px;"><svg width="8.064" height="10.379" viewBox="0 0 1139 1466" style="vertical-align:baseline;overflow:visible"><path d="M763 0H583V1147Q518 1085 412 1023Q306 961 223 930V1104Q373 1175 486 1276Q599 1377 646 1466H763Z" transform="matrix(1 0 0 -1 0 1466)" fill="currentColor"/></svg></div>
<div class="t" style="left:834.20px;top:465.58px;width:100px;text-align:center;font-size:14.5px;font-weight:400;color:#f0a030;transform-origin:0 13.12px;">49</div>
<div class="t" style="left:1014.00px;top:465.58px;width:100px;text-align:center;font-size:14.5px;font-weight:400;color:#111;transform-origin:0 13.12px;"><svg width="8.064" height="10.379" viewBox="0 0 1139 1466" style="vertical-align:baseline;overflow:visible"><path d="M763 0H583V1147Q518 1085 412 1023Q306 961 223 930V1104Q373 1175 486 1276Q599 1377 646 1466H763Z" transform="matrix(1 0 0 -1 0 1466)" fill="currentColor"/></svg></div>
<div class="t" style="left:1184.00px;top:465.88px;width:120px;text-align:center;font-size:14.5px;font-weight:700;color:#d9596c;transform-origin:0 13.12px;">FAILED</div>
<div class="a" style="left:1333.80px;top:466.40px;width:95.20px;height:16.00px;background:#d4e4d4;border:1px solid #3b8f46;border-radius:2px;box-sizing:border-box;"></div>
<div class="a" style="left:1429.40px;top:466.40px;width:83.60px;height:16.00px;background:#f8dfe2;border:1px solid #d9606d;border-radius:2px;box-sizing:border-box;"></div>
<div class="t" style="left:1361.40px;top:466.48px;width:40px;text-align:center;font-size:14.5px;font-weight:400;color:#111;transform-origin:0 13.12px;">P</div>
<div class="t" style="left:1451.00px;top:466.48px;width:40px;text-align:center;font-size:14.5px;font-weight:400;color:#111;transform-origin:0 13.12px;">F</div>
<div class="a" style="left:39.40px;top:485.94px;width:1.30px;height:11.57px;background:#c4c4c4;"></div>
<svg class="a" style="left:35.70px;top:492.91px" width="10" height="9" viewBox="0 0 10 9"><rect x="0.6" y="0.6" width="8" height="7" rx="1.8" fill="#fff" stroke="#9a9a9a" stroke-width="1.1"/><rect x="2.4" y="3.2" width="4.4" height="1.6" fill="#333"/></svg>
<div class="a" style="left:45.40px;top:498.01px;width:1.20px;height:1.00px;background:#bbb;"></div>
<svg class="a" style="left:49.20px;top:487.21px" width="10" height="14.5" viewBox="0 0 10 14.5"><path d="M0.65 3.2V13.1Q0.65 14 1.5 14H8.5Q9.35 14 9.35 13.1V3.2H0.65" fill="#fff" stroke="#f0a838" stroke-width="1.25"/><path d="M2.1 4.3Q2.1 0.9 5 0.9Q7.9 0.9 7.9 4.3" fill="#fff" stroke="#959595" stroke-width="1.1"/><rect x="2.9" y="3.6" width="4.2" height="1.1" fill="#f2b03c"/><path d="M2.7 7L4.3 8.5L7.3 5.7M2.7 10.6L4.3 12.1L7.3 9.3" fill="none" stroke="#606060" stroke-width="1.2"/></svg>
<div class="t" style="left:65.00px;top:488.72px;font-size:14.5px;font-weight:400;color:#111;transform-origin:0 13.12px;">[CONSTANT] SOP='27-07'</div>
<div class="t" style="left:654.70px;top:488.72px;width:100px;text-align:center;font-size:14.5px;font-weight:400;color:#111;transform-origin:0 13.12px;">7</div>
<div class="t" style="left:834.20px;top:488.72px;width:100px;text-align:center;font-size:14.5px;font-weight:400;color:#111;transform-origin:0 13.12px;">502</div>
<div class="t" style="left:1014.00px;top:488.72px;width:100px;text-align:center;font-size:14.5px;font-weight:400;color:#111;transform-origin:0 13.12px;">8</div>
<div class="t" style="left:1184.00px;top:489.02px;width:120px;text-align:center;font-size:14.5px;font-weight:700;color:#d9596c;transform-origin:0 13.12px;">FAILED</div>
<div class="a" style="left:1333.80px;top:487.34px;width:122.40px;height:2.00px;background:#2a9d3c;"></div>
<div class="a" style="left:1456.20px;top:487.34px;width:9.80px;height:2.00px;background:#e0d878;"></div>
<div class="a" style="left:1466.00px;top:487.34px;width:47.00px;height:2.00px;background:#d9505e;"></div>
<div class="a" style="left:1333.80px;top:490.34px;width:179.20px;height:13.60px;background:#2088a2;"></div>
<div class="t" style="left:1333.40px;top:490.99px;width:180px;text-align:center;font-size:11px;font-weight:400;color:#f4f8fa;transform-origin:0 9.96px;"><svg width="6.118" height="7.874" viewBox="0 0 1139 1466" style="vertical-align:baseline;overflow:visible"><path d="M763 0H583V1147Q518 1085 412 1023Q306 961 223 930V1104Q373 1175 486 1276Q599 1377 646 1466H763Z" transform="matrix(1 0 0 -1 0 1466)" fill="currentColor"/></svg>00% (8/8)</div>
</div>
</body></html>
